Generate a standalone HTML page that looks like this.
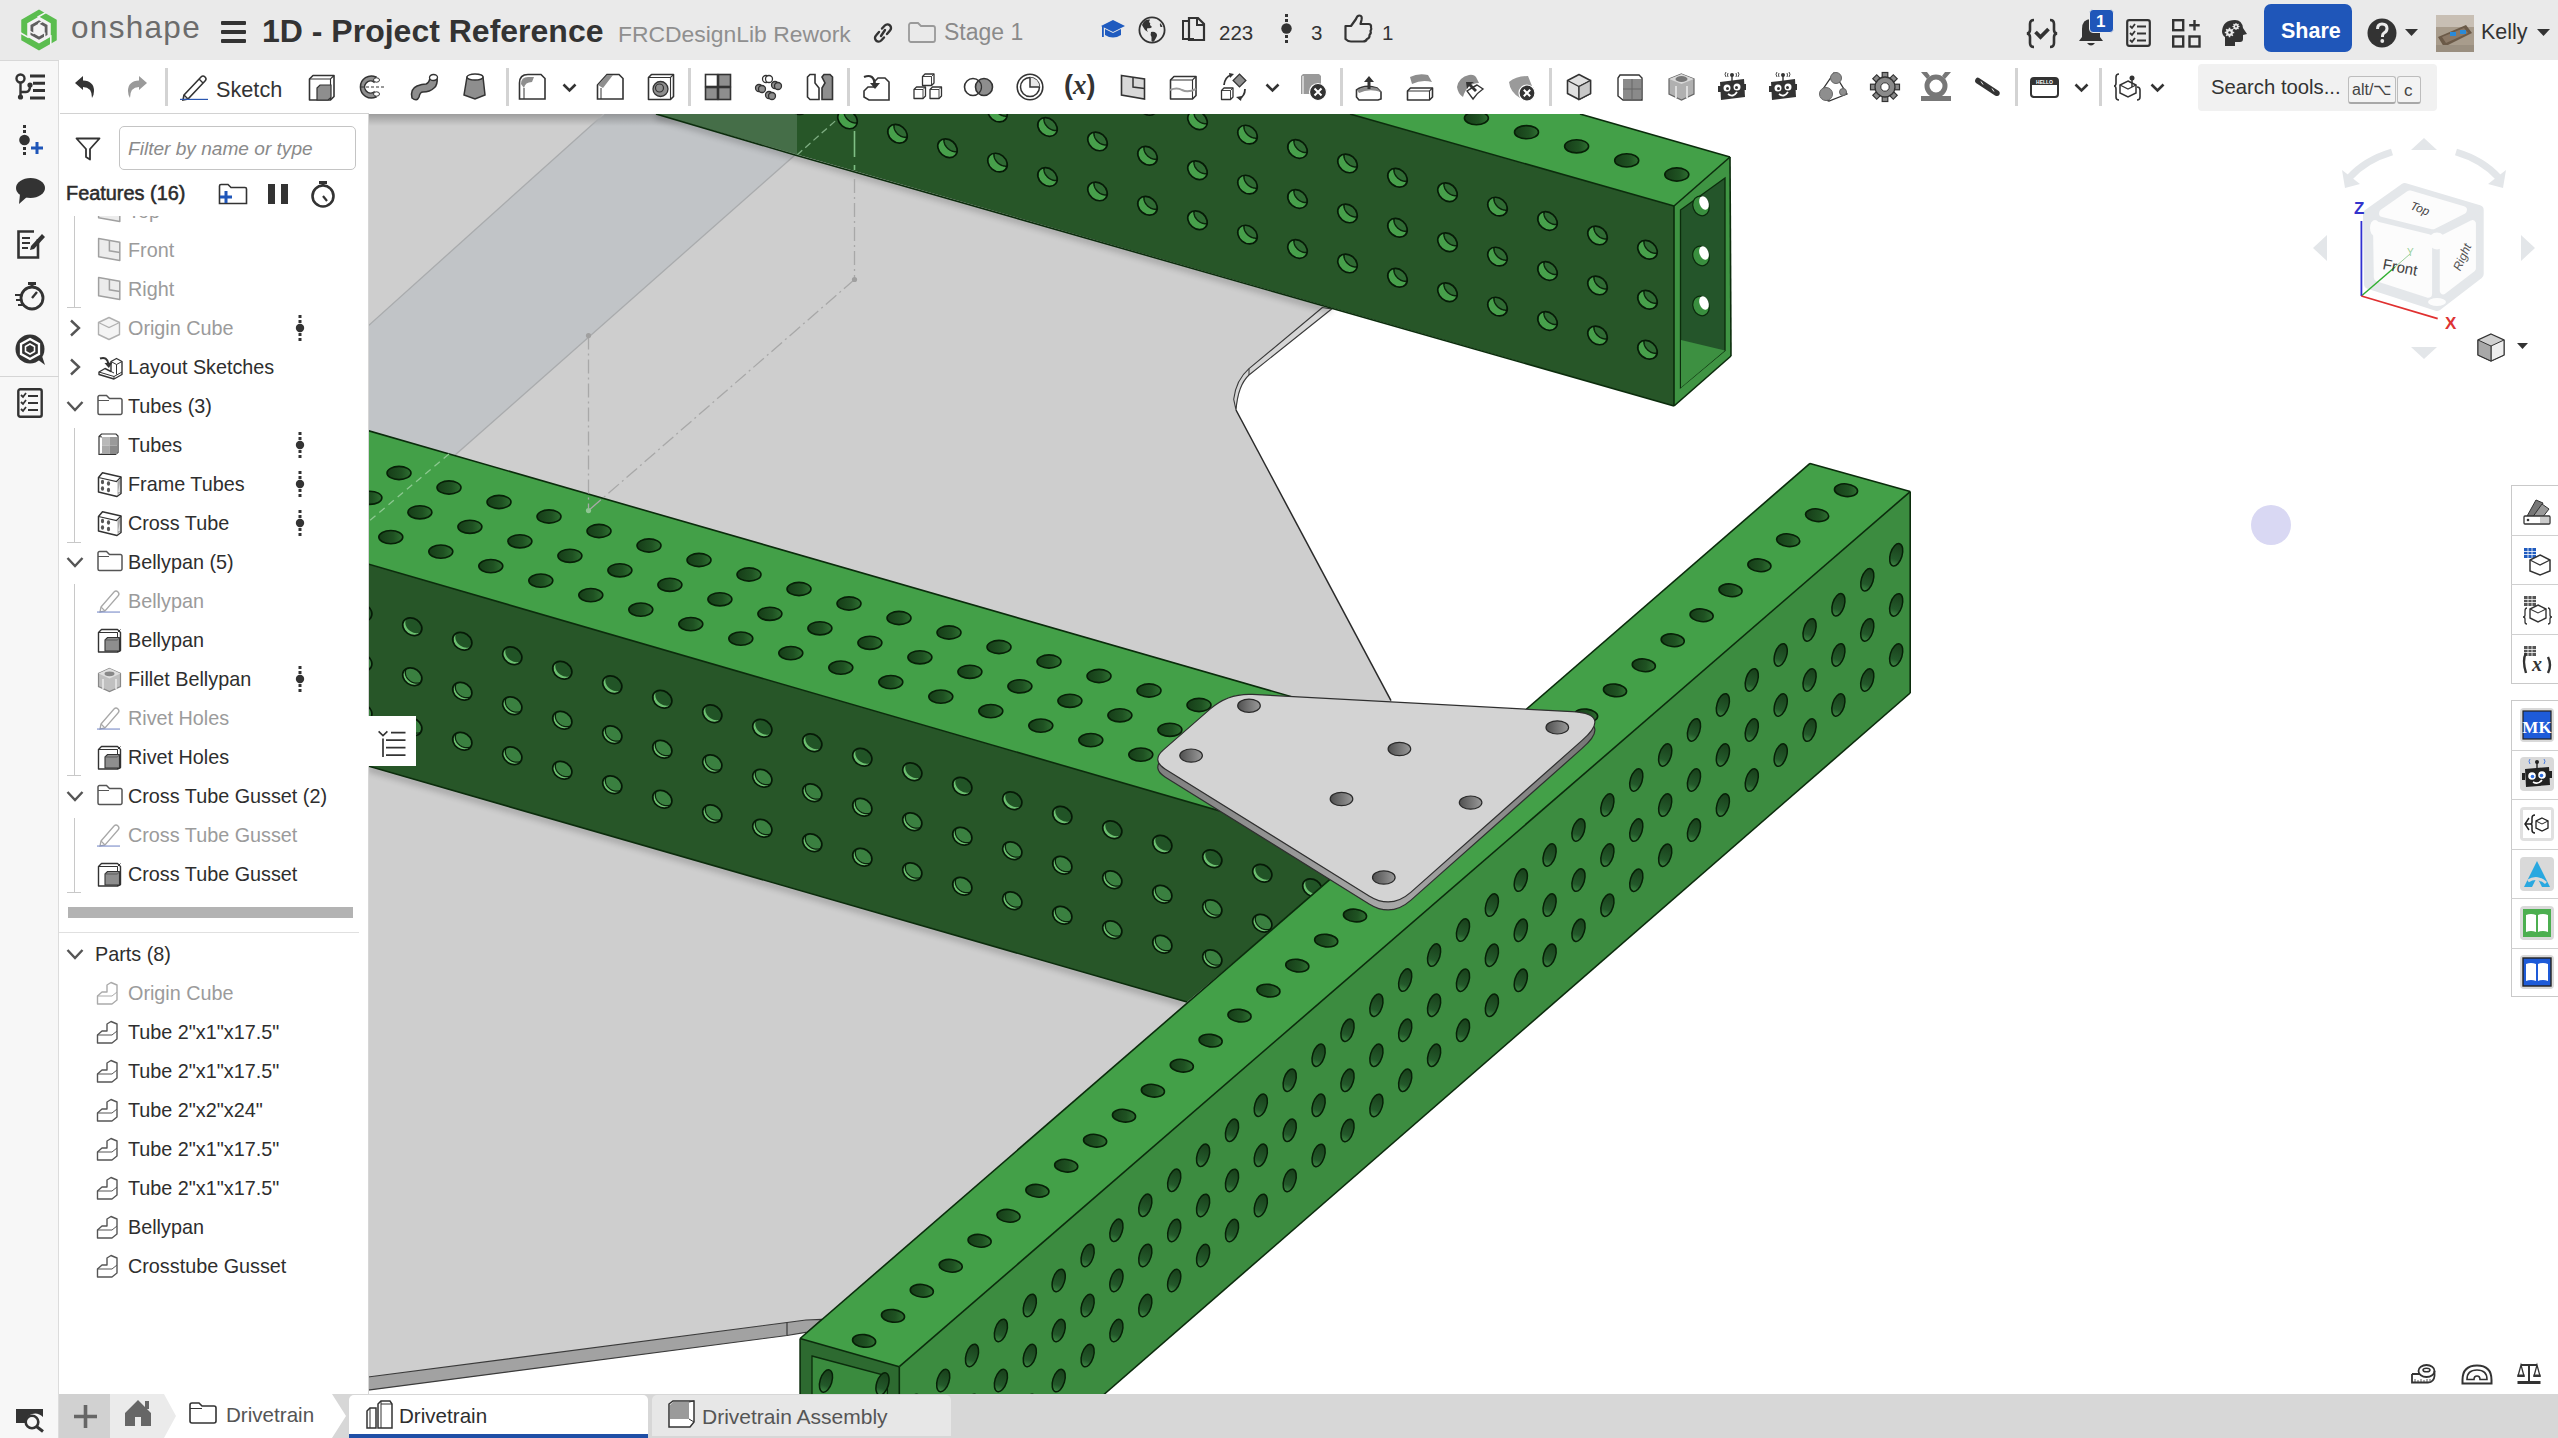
<!DOCTYPE html>
<html><head><meta charset="utf-8"><style>
*{box-sizing:border-box}
html,body{margin:0;padding:0;width:2558px;height:1438px;overflow:hidden;background:#fff;font-family:"Liberation Sans",sans-serif;color:#333}
.a{position:absolute}
.t{position:absolute;white-space:nowrap;line-height:1}
svg{overflow:visible}
</style></head>
<body>
<svg class="a" style="left:0;top:0" width="2558" height="1438" viewBox="0 0 2558 1438"><defs>
<clipPath id="cVP"><rect x="368" y="114" width="2190" height="1281"/></clipPath>
<clipPath id="cBTtop"><polygon points="1350.0,114.0 1580.0,114.0 1730.0,157.0 1674.0,206.0"/></clipPath>
<clipPath id="cBTside"><polygon points="656.0,114.0 1350.0,114.0 1674.0,206.0 1674.0,406.0"/></clipPath>
<clipPath id="cLTtop"><polygon points="368.0,430.6 1480.0,751.0 1363.0,852.5 368.0,564.0"/></clipPath>
<clipPath id="cLTside"><polygon points="368.0,564.0 1363.0,852.5 1187.0,1002.0 368.0,766.0"/></clipPath>
<clipPath id="cRTtop"><polygon points="800.1,1338.5 1810.0,463.4 1910.2,491.6 899.3,1366.7"/></clipPath>
<clipPath id="cRTside"><polygon points="899.3,1366.7 1910.2,491.6 1910.2,693.0 1103.3,1395.0 899.3,1395.0"/></clipPath>
<linearGradient id="gTop" x1="0" y1="0" x2="1" y2="0"><stop offset="0" stop-color="#163d18"/><stop offset="0.6" stop-color="#1f5222"/><stop offset="1" stop-color="#2f7032"/></linearGradient>
<linearGradient id="gSide" x1="0" y1="0" x2="0" y2="1"><stop offset="0" stop-color="#183f1a"/><stop offset="0.7" stop-color="#23592a"/><stop offset="1" stop-color="#3f8a45"/></linearGradient>
<linearGradient id="gGus" x1="0" y1="0" x2="1" y2="0"><stop offset="0" stop-color="#505050"/><stop offset="1" stop-color="#9a9a9a"/></linearGradient>
<linearGradient id="gStrip" x1="0" y1="0" x2="0" y2="1"><stop offset="0" stop-color="#6d6d6d"/><stop offset="1" stop-color="#a8a8a8"/></linearGradient>
<filter id="fBlur" x="-5%" y="-50%" width="110%" height="200%"><feGaussianBlur stdDeviation="3"/></filter>
<linearGradient id="gShadow" x1="0" y1="0" x2="0" y2="1"><stop offset="0" stop-color="#000" stop-opacity="0.10"/><stop offset="1" stop-color="#000" stop-opacity="0"/></linearGradient>
</defs><defs><g id="hSL"><ellipse rx="10.2" ry="8.2" transform="rotate(35)" fill="#6cc070"/><path d="M-5.72,-8.08 L-5.31,-8.26 L-4.88,-8.43 L-4.45,-8.56 L-4.00,-8.68 L-3.53,-8.77 L-3.06,-8.84 L-2.58,-8.89 L-2.10,-8.91 L-1.60,-8.90 L-1.11,-8.87 L-0.61,-8.82 L-0.10,-8.74 L0.40,-8.64 L0.90,-8.52 L1.40,-8.37 L1.89,-8.20 L2.38,-8.00 L2.86,-7.79 L3.34,-7.55 L3.80,-7.29 L4.26,-7.01 L4.70,-6.72 L5.13,-6.40 L5.55,-6.07 L5.95,-5.72 L6.34,-5.35 L6.71,-4.97 L7.06,-4.58 L7.39,-4.17 L7.70,-3.76 L7.98,-3.33 L8.25,-2.89 L8.50,-2.45 L8.72,-2.00 L8.91,-1.54 L9.09,-1.08 L9.23,-0.61 L9.36,-0.15 L9.45,0.32 L9.52,0.78 L9.57,1.25 L9.59,1.71 L9.58,2.16 L9.55,2.61 L9.49,3.05 L9.40,3.49 L9.29,3.91 L9.15,4.33 L8.99,4.73 L8.80,5.12 L8.59,5.49 L8.32,5.68 L7.91,5.86 L7.48,6.03 L7.05,6.16 L6.60,6.28 L6.13,6.37 L5.66,6.44 L5.18,6.49 L4.70,6.51 L4.20,6.50 L3.71,6.47 L3.21,6.42 L2.70,6.34 L2.20,6.24 L1.70,6.12 L1.20,5.97 L0.71,5.80 L0.22,5.60 L-0.26,5.39 L-0.74,5.15 L-1.20,4.89 L-1.66,4.61 L-2.10,4.32 L-2.53,4.00 L-2.95,3.67 L-3.35,3.32 L-3.74,2.95 L-4.11,2.57 L-4.46,2.18 L-4.79,1.77 L-5.10,1.36 L-5.38,0.93 L-5.65,0.49 L-5.90,0.05 L-6.12,-0.40 L-6.31,-0.86 L-6.49,-1.32 L-6.63,-1.79 L-6.76,-2.25 L-6.85,-2.72 L-6.92,-3.18 L-6.97,-3.65 L-6.99,-4.11 L-6.98,-4.56 L-6.95,-5.01 L-6.89,-5.45 L-6.80,-5.89 L-6.69,-6.31 L-6.55,-6.73 L-6.39,-7.13 L-6.20,-7.52 L-5.99,-7.89Z" fill="#215426"/><ellipse rx="10.2" ry="8.2" transform="rotate(35)" fill="none" stroke="#061a07" stroke-width="1.7"/></g><g id="hSL2"><ellipse rx="10.2" ry="8.2" transform="rotate(35)" fill="#6cc070"/><path d="M-5.72,-8.08 L-5.31,-8.26 L-4.88,-8.43 L-4.45,-8.56 L-4.00,-8.68 L-3.53,-8.77 L-3.06,-8.84 L-2.58,-8.89 L-2.10,-8.91 L-1.60,-8.90 L-1.11,-8.87 L-0.61,-8.82 L-0.10,-8.74 L0.40,-8.64 L0.90,-8.52 L1.40,-8.37 L1.89,-8.20 L2.38,-8.00 L2.86,-7.79 L3.34,-7.55 L3.80,-7.29 L4.26,-7.01 L4.70,-6.72 L5.13,-6.40 L5.55,-6.07 L5.95,-5.72 L6.34,-5.35 L6.71,-4.97 L7.06,-4.58 L7.39,-4.17 L7.70,-3.76 L7.98,-3.33 L8.25,-2.89 L8.50,-2.45 L8.72,-2.00 L8.91,-1.54 L9.09,-1.08 L9.23,-0.61 L9.36,-0.15 L9.45,0.32 L9.52,0.78 L9.57,1.25 L9.59,1.71 L9.58,2.16 L9.55,2.61 L9.49,3.05 L9.40,3.49 L9.29,3.91 L9.15,4.33 L8.99,4.73 L8.80,5.12 L8.59,5.49 L8.32,5.68 L7.91,5.86 L7.48,6.03 L7.05,6.16 L6.60,6.28 L6.13,6.37 L5.66,6.44 L5.18,6.49 L4.70,6.51 L4.20,6.50 L3.71,6.47 L3.21,6.42 L2.70,6.34 L2.20,6.24 L1.70,6.12 L1.20,5.97 L0.71,5.80 L0.22,5.60 L-0.26,5.39 L-0.74,5.15 L-1.20,4.89 L-1.66,4.61 L-2.10,4.32 L-2.53,4.00 L-2.95,3.67 L-3.35,3.32 L-3.74,2.95 L-4.11,2.57 L-4.46,2.18 L-4.79,1.77 L-5.10,1.36 L-5.38,0.93 L-5.65,0.49 L-5.90,0.05 L-6.12,-0.40 L-6.31,-0.86 L-6.49,-1.32 L-6.63,-1.79 L-6.76,-2.25 L-6.85,-2.72 L-6.92,-3.18 L-6.97,-3.65 L-6.99,-4.11 L-6.98,-4.56 L-6.95,-5.01 L-6.89,-5.45 L-6.80,-5.89 L-6.69,-6.31 L-6.55,-6.73 L-6.39,-7.13 L-6.20,-7.52 L-5.99,-7.89Z" fill="#3a8040"/><path d="M8.32,5.68 L7.91,5.86 L7.48,6.03 L7.05,6.16 L6.60,6.28 L6.13,6.37 L5.66,6.44 L5.18,6.49 L4.70,6.51 L4.20,6.50 L3.71,6.47 L3.21,6.42 L2.70,6.34 L2.20,6.24 L1.70,6.12 L1.20,5.97 L0.71,5.80 L0.22,5.60 L-0.26,5.39 L-0.74,5.15 L-1.20,4.89 L-1.66,4.61 L-2.10,4.32 L-2.53,4.00 L-2.95,3.67 L-3.35,3.32 L-3.74,2.95 L-4.11,2.57 L-4.46,2.18 L-4.79,1.77 L-5.10,1.36 L-5.38,0.93 L-5.65,0.49 L-5.90,0.05 L-6.12,-0.40 L-6.31,-0.86 L-6.49,-1.32 L-6.63,-1.79 L-6.76,-2.25 L-6.85,-2.72 L-6.92,-3.18 L-6.97,-3.65 L-6.99,-4.11 L-6.98,-4.56 L-6.95,-5.01 L-6.89,-5.45 L-6.80,-5.89 L-6.69,-6.31 L-6.55,-6.73 L-6.39,-7.13 L-6.20,-7.52 L-5.99,-7.89" fill="none" stroke="#0a230b" stroke-width="1.3"/><ellipse rx="10.2" ry="8.2" transform="rotate(35)" fill="none" stroke="#061a07" stroke-width="1.7"/></g><g id="hSD"><ellipse rx="10.6" ry="8.4" transform="rotate(40)" fill="#47a04b"/><path d="M-3.40,-9.29 L-2.91,-9.34 L-2.42,-9.37 L-1.92,-9.37 L-1.42,-9.34 L-0.91,-9.29 L-0.40,-9.21 L0.11,-9.11 L0.62,-8.98 L1.12,-8.83 L1.63,-8.65 L2.13,-8.45 L2.63,-8.23 L3.11,-7.98 L3.59,-7.71 L4.06,-7.42 L4.52,-7.11 L4.97,-6.78 L5.40,-6.43 L5.82,-6.07 L6.22,-5.69 L6.60,-5.29 L6.97,-4.88 L7.32,-4.45 L7.64,-4.01 L7.95,-3.57 L8.24,-3.11 L8.50,-2.64 L8.74,-2.17 L8.95,-1.69 L9.14,-1.20 L9.31,-0.71 L9.45,-0.22 L9.56,0.27 L9.65,0.76 L9.71,1.25 L9.74,1.73 L9.75,2.21 L9.73,2.68 L9.69,3.15 L9.60,3.49 L9.11,3.54 L8.62,3.57 L8.12,3.57 L7.62,3.54 L7.11,3.49 L6.60,3.41 L6.09,3.31 L5.58,3.18 L5.08,3.03 L4.57,2.85 L4.07,2.65 L3.57,2.43 L3.09,2.18 L2.61,1.91 L2.14,1.62 L1.68,1.31 L1.23,0.98 L0.80,0.63 L0.38,0.27 L-0.02,-0.11 L-0.40,-0.51 L-0.77,-0.92 L-1.12,-1.35 L-1.44,-1.79 L-1.75,-2.23 L-2.04,-2.69 L-2.30,-3.16 L-2.54,-3.63 L-2.75,-4.11 L-2.94,-4.60 L-3.11,-5.09 L-3.25,-5.58 L-3.36,-6.07 L-3.45,-6.56 L-3.51,-7.05 L-3.54,-7.53 L-3.55,-8.01 L-3.53,-8.48 L-3.49,-8.95Z" fill="#2f6a33"/><path d="M9.60,3.49 L9.11,3.54 L8.62,3.57 L8.12,3.57 L7.62,3.54 L7.11,3.49 L6.60,3.41 L6.09,3.31 L5.58,3.18 L5.08,3.03 L4.57,2.85 L4.07,2.65 L3.57,2.43 L3.09,2.18 L2.61,1.91 L2.14,1.62 L1.68,1.31 L1.23,0.98 L0.80,0.63 L0.38,0.27 L-0.02,-0.11 L-0.40,-0.51 L-0.77,-0.92 L-1.12,-1.35 L-1.44,-1.79 L-1.75,-2.23 L-2.04,-2.69 L-2.30,-3.16 L-2.54,-3.63 L-2.75,-4.11 L-2.94,-4.60 L-3.11,-5.09 L-3.25,-5.58 L-3.36,-6.07 L-3.45,-6.56 L-3.51,-7.05 L-3.54,-7.53 L-3.55,-8.01 L-3.53,-8.48 L-3.49,-8.95" fill="none" stroke="#0a230b" stroke-width="1.5"/><ellipse rx="10.6" ry="8.4" transform="rotate(40)" fill="none" stroke="#061a07" stroke-width="1.7"/></g><g id="hT"><ellipse rx="12" ry="6.6" fill="url(#gTop)" stroke="#072007" stroke-width="1.6"/></g><g id="hTR"><ellipse rx="11.6" ry="6.3" transform="rotate(6)" fill="url(#gTop)" stroke="#072007" stroke-width="1.6"/></g><g id="hSR"><ellipse rx="5.9" ry="11.6" transform="rotate(17)" fill="url(#gSide)" stroke="#072007" stroke-width="1.5"/></g><g id="hG"><ellipse rx="11.3" ry="6.6" fill="url(#gGus)" stroke="#2a2a2a" stroke-width="1.2"/></g></defs><g clip-path="url(#cVP)"><polygon points="368.0,114.0 656.0,114.0 1331.6,309.0 1249.0,375.0 1240.0,388.0 1236.0,410.0 1391.0,700.7 1480.0,870.0 900.0,1370.0 822.0,1319.3 806.0,1320.0 787.0,1322.5 368.0,1377.0" fill="#cecece" stroke="none" stroke-width="0" /><polygon points="368.0,1377.0 787.0,1322.5 806.0,1320.0 822.0,1319.3 807.2,1332.2 787.0,1335.5 368.0,1390.2" fill="#a2a2a2" stroke="#3a3a3a" stroke-width="1.2" stroke-linejoin="round"/><line x1="787.0" y1="1322.5" x2="787.0" y2="1335.5" stroke="#3a3a3a" stroke-width="1.2" /><polygon points="604.0,114.0 656.0,114.0 795.0,155.0 454.0,456.0 368.0,430.6 368.0,326.0" fill="#c1c4c7" stroke="none" stroke-width="0" /><linearGradient id="gTopSh" x1="0" y1="0" x2="0" y2="1"><stop offset="0" stop-color="#000" stop-opacity="0.24"/><stop offset="1" stop-color="#000" stop-opacity="0"/></linearGradient><polygon points="368,114 656,114 697,126 368,126" fill="url(#gTopSh)"/><line x1="604.0" y1="114.0" x2="368.0" y2="326.0" stroke="#a9abad" stroke-width="1.3" /><line x1="795.0" y1="155.0" x2="454.0" y2="456.0" stroke="#a9abad" stroke-width="1.3" /><path d="M1322.4,307.5 L1249,368.7 Q1236,380 1233.7,399.3 L1236,410 Q1238,385 1249,375 L1331.6,309 Z" fill="#d6d6d6" stroke="#3a3a3a" stroke-width="1.1"/><line x1="1249.0" y1="368.7" x2="1249.0" y2="375.0" stroke="#3a3a3a" stroke-width="1" /><line x1="1236.0" y1="410.0" x2="1391.0" y2="700.7" stroke="#2a2a2a" stroke-width="1.5" /><g filter="url(#fBlur)" opacity="0.22"><line x1="656.0" y1="116.0" x2="1331.0" y2="310.0" stroke="#000" stroke-width="6" /><line x1="368.0" y1="768.0" x2="1187.0" y2="1004.0" stroke="#000" stroke-width="6" /></g><polygon points="656.0,114.0 1350.0,114.0 1674.0,206.0 1674.0,406.0" fill="#275628" stroke="none" stroke-width="0" /><polygon points="1350.0,114.0 1580.0,114.0 1730.0,157.0 1674.0,206.0" fill="#43a048" stroke="none" stroke-width="0" /><polygon points="1674.0,206.0 1730.0,157.0 1731.0,356.0 1674.0,406.0" fill="#3f9443" stroke="none" stroke-width="0" /><polygon points="1680.5,210.0 1725.0,178.0 1725.0,350.5 1680.5,387.5" fill="#24552a" stroke="#0b2c0c" stroke-width="1.3" /><polygon points="1681.0,340.0 1725.0,350.5 1681.0,387.5" fill="#3d9041" stroke="none" stroke-width="0" /><ellipse cx="1701" cy="206" rx="8" ry="10" transform="rotate(-20 1701 206)" fill="#3a8f3f" stroke="#0b2a0c" stroke-width="1.2"/><ellipse cx="1704" cy="203" rx="4.5" ry="7" transform="rotate(-20 1704 203)" fill="#fff"/><ellipse cx="1701" cy="256" rx="8" ry="10" transform="rotate(-20 1701 256)" fill="#3a8f3f" stroke="#0b2a0c" stroke-width="1.2"/><ellipse cx="1704" cy="253" rx="4.5" ry="7" transform="rotate(-20 1704 253)" fill="#fff"/><ellipse cx="1701" cy="306" rx="8" ry="10" transform="rotate(-20 1701 306)" fill="#3a8f3f" stroke="#0b2a0c" stroke-width="1.2"/><ellipse cx="1704" cy="303" rx="4.5" ry="7" transform="rotate(-20 1704 303)" fill="#fff"/><g clip-path="url(#cBTtop)"><use href="#hT" x="1476.4" y="118.1"/><use href="#hT" x="1526.5" y="132.2"/><use href="#hT" x="1576.6" y="146.3"/><use href="#hT" x="1626.7" y="160.4"/><use href="#hT" x="1676.8" y="174.5"/><use href="#hT" x="1726.9" y="188.6"/></g><g clip-path="url(#cBTside)"><use href="#hSD" x="797.5" y="105.0"/><use href="#hSD" x="847.5" y="119.4"/><use href="#hSD" x="897.5" y="133.8"/><use href="#hSD" x="947.5" y="148.2"/><use href="#hSD" x="997.5" y="112.6"/><use href="#hSD" x="997.5" y="162.6"/><use href="#hSD" x="1047.5" y="127.0"/><use href="#hSD" x="1047.5" y="177.0"/><use href="#hSD" x="1097.5" y="141.4"/><use href="#hSD" x="1097.5" y="191.4"/><use href="#hSD" x="1147.5" y="105.8"/><use href="#hSD" x="1147.5" y="155.8"/><use href="#hSD" x="1147.5" y="205.8"/><use href="#hSD" x="1197.5" y="120.2"/><use href="#hSD" x="1197.5" y="170.2"/><use href="#hSD" x="1197.5" y="220.2"/><use href="#hSD" x="1247.5" y="134.6"/><use href="#hSD" x="1247.5" y="184.6"/><use href="#hSD" x="1247.5" y="234.6"/><use href="#hSD" x="1297.5" y="149.0"/><use href="#hSD" x="1297.5" y="199.0"/><use href="#hSD" x="1297.5" y="249.0"/><use href="#hSD" x="1347.5" y="163.4"/><use href="#hSD" x="1347.5" y="213.4"/><use href="#hSD" x="1347.5" y="263.4"/><use href="#hSD" x="1397.5" y="177.8"/><use href="#hSD" x="1397.5" y="227.8"/><use href="#hSD" x="1397.5" y="277.8"/><use href="#hSD" x="1447.5" y="192.2"/><use href="#hSD" x="1447.5" y="242.2"/><use href="#hSD" x="1447.5" y="292.2"/><use href="#hSD" x="1497.5" y="206.6"/><use href="#hSD" x="1497.5" y="256.6"/><use href="#hSD" x="1497.5" y="306.6"/><use href="#hSD" x="1547.5" y="221.0"/><use href="#hSD" x="1547.5" y="271.0"/><use href="#hSD" x="1547.5" y="321.0"/><use href="#hSD" x="1597.5" y="235.4"/><use href="#hSD" x="1597.5" y="285.4"/><use href="#hSD" x="1597.5" y="335.4"/><use href="#hSD" x="1647.5" y="249.8"/><use href="#hSD" x="1647.5" y="299.8"/><use href="#hSD" x="1647.5" y="349.8"/></g><polygon points="656,114 797,114 797,155.6" fill="#6a8c6f" fill-opacity="0.45"/><line x1="797.0" y1="155.0" x2="835.7" y2="120.6" stroke="#7fae83" stroke-width="1.3" stroke-dasharray="7 4"/><line x1="656.0" y1="114.0" x2="795.0" y2="155.0" stroke="#0b2c0c" stroke-width="1.6" /><line x1="795.0" y1="155.0" x2="1674.0" y2="406.0" stroke="#0b2c0c" stroke-width="1.6" /><line x1="1350.0" y1="114.0" x2="1674.0" y2="206.0" stroke="#0b2c0c" stroke-width="1.6" /><line x1="1580.0" y1="114.0" x2="1730.0" y2="157.0" stroke="#0b2c0c" stroke-width="1.6" /><line x1="1674.0" y1="206.0" x2="1674.0" y2="406.0" stroke="#0b2c0c" stroke-width="1.6" /><line x1="1730.0" y1="157.0" x2="1731.0" y2="356.0" stroke="#0b2c0c" stroke-width="1.6" /><line x1="1731.0" y1="356.0" x2="1674.0" y2="406.0" stroke="#0b2c0c" stroke-width="1.6" /><line x1="1674.0" y1="206.0" x2="1730.0" y2="157.0" stroke="#0b2c0c" stroke-width="1.6" /><polygon points="368.0,564.0 1363.0,852.5 1187.0,1002.0 368.0,766.0" fill="#275628" stroke="none" stroke-width="0" /><polygon points="368.0,430.6 1480.0,751.0 1363.0,852.5 368.0,564.0" fill="#43a048" stroke="none" stroke-width="0" /><g clip-path="url(#cLTtop)"><use href="#hT" x="299.0" y="444.0"/><use href="#hT" x="319.9" y="483.3"/><use href="#hT" x="340.8" y="522.6"/><use href="#hT" x="349.0" y="458.5"/><use href="#hT" x="369.9" y="497.8"/><use href="#hT" x="390.8" y="537.1"/><use href="#hT" x="399.0" y="473.0"/><use href="#hT" x="419.9" y="512.3"/><use href="#hT" x="440.8" y="551.6"/><use href="#hT" x="449.0" y="487.5"/><use href="#hT" x="469.9" y="526.8"/><use href="#hT" x="490.8" y="566.1"/><use href="#hT" x="499.0" y="502.0"/><use href="#hT" x="519.9" y="541.3"/><use href="#hT" x="540.8" y="580.6"/><use href="#hT" x="549.0" y="516.5"/><use href="#hT" x="569.9" y="555.8"/><use href="#hT" x="590.8" y="595.1"/><use href="#hT" x="599.0" y="531.0"/><use href="#hT" x="619.9" y="570.3"/><use href="#hT" x="640.8" y="609.6"/><use href="#hT" x="649.0" y="545.5"/><use href="#hT" x="669.9" y="584.8"/><use href="#hT" x="690.8" y="624.1"/><use href="#hT" x="699.0" y="560.0"/><use href="#hT" x="719.9" y="599.3"/><use href="#hT" x="740.8" y="638.6"/><use href="#hT" x="749.0" y="574.5"/><use href="#hT" x="769.9" y="613.8"/><use href="#hT" x="790.8" y="653.1"/><use href="#hT" x="799.0" y="589.0"/><use href="#hT" x="819.9" y="628.3"/><use href="#hT" x="840.8" y="667.6"/><use href="#hT" x="849.0" y="603.5"/><use href="#hT" x="869.9" y="642.8"/><use href="#hT" x="890.8" y="682.1"/><use href="#hT" x="899.0" y="618.0"/><use href="#hT" x="919.9" y="657.3"/><use href="#hT" x="940.8" y="696.6"/><use href="#hT" x="949.0" y="632.5"/><use href="#hT" x="969.9" y="671.8"/><use href="#hT" x="990.8" y="711.1"/><use href="#hT" x="999.0" y="647.0"/><use href="#hT" x="1019.9" y="686.3"/><use href="#hT" x="1040.8" y="725.6"/><use href="#hT" x="1049.0" y="661.5"/><use href="#hT" x="1069.9" y="700.8"/><use href="#hT" x="1090.8" y="740.1"/><use href="#hT" x="1099.0" y="676.0"/><use href="#hT" x="1119.9" y="715.3"/><use href="#hT" x="1140.8" y="754.6"/><use href="#hT" x="1149.0" y="690.5"/><use href="#hT" x="1169.9" y="729.8"/><use href="#hT" x="1190.8" y="769.1"/><use href="#hT" x="1199.0" y="705.0"/><use href="#hT" x="1219.9" y="744.3"/><use href="#hT" x="1240.8" y="783.6"/><use href="#hT" x="1249.0" y="719.5"/><use href="#hT" x="1269.9" y="758.8"/><use href="#hT" x="1290.8" y="798.1"/><use href="#hT" x="1299.0" y="734.0"/><use href="#hT" x="1319.9" y="773.3"/><use href="#hT" x="1340.8" y="812.6"/><use href="#hT" x="1349.0" y="748.5"/><use href="#hT" x="1369.9" y="787.8"/><use href="#hT" x="1390.8" y="827.1"/><use href="#hT" x="1399.0" y="763.0"/><use href="#hT" x="1419.9" y="802.3"/><use href="#hT" x="1440.8" y="841.6"/><use href="#hT" x="1449.0" y="777.5"/><use href="#hT" x="1469.9" y="816.8"/><use href="#hT" x="1490.8" y="856.1"/><use href="#hT" x="1499.0" y="792.0"/><use href="#hT" x="1519.9" y="831.3"/><use href="#hT" x="1540.8" y="870.6"/><use href="#hT" x="1549.0" y="806.5"/><use href="#hT" x="1569.9" y="845.8"/><use href="#hT" x="1590.8" y="885.1"/></g><g clip-path="url(#cLTside)"><use href="#hSL" x="362.3" y="612.2"/><use href="#hSL2" x="362.3" y="662.2"/><use href="#hSL2" x="362.3" y="712.2"/><use href="#hSL" x="412.3" y="626.7"/><use href="#hSL2" x="412.3" y="676.7"/><use href="#hSL2" x="412.3" y="726.7"/><use href="#hSL" x="462.3" y="641.2"/><use href="#hSL2" x="462.3" y="691.2"/><use href="#hSL2" x="462.3" y="741.2"/><use href="#hSL" x="512.3" y="655.7"/><use href="#hSL2" x="512.3" y="705.7"/><use href="#hSL2" x="512.3" y="755.7"/><use href="#hSL" x="562.3" y="670.2"/><use href="#hSL2" x="562.3" y="720.2"/><use href="#hSL2" x="562.3" y="770.2"/><use href="#hSL" x="612.3" y="684.7"/><use href="#hSL2" x="612.3" y="734.7"/><use href="#hSL2" x="612.3" y="784.7"/><use href="#hSL" x="662.3" y="699.2"/><use href="#hSL2" x="662.3" y="749.2"/><use href="#hSL2" x="662.3" y="799.2"/><use href="#hSL" x="712.3" y="713.7"/><use href="#hSL2" x="712.3" y="763.7"/><use href="#hSL2" x="712.3" y="813.7"/><use href="#hSL" x="762.3" y="728.2"/><use href="#hSL2" x="762.3" y="778.2"/><use href="#hSL2" x="762.3" y="828.2"/><use href="#hSL" x="812.3" y="742.7"/><use href="#hSL2" x="812.3" y="792.7"/><use href="#hSL2" x="812.3" y="842.7"/><use href="#hSL" x="862.3" y="757.2"/><use href="#hSL2" x="862.3" y="807.2"/><use href="#hSL2" x="862.3" y="857.2"/><use href="#hSL" x="912.3" y="771.7"/><use href="#hSL2" x="912.3" y="821.7"/><use href="#hSL2" x="912.3" y="871.7"/><use href="#hSL" x="962.3" y="786.2"/><use href="#hSL2" x="962.3" y="836.2"/><use href="#hSL2" x="962.3" y="886.2"/><use href="#hSL" x="1012.3" y="800.7"/><use href="#hSL2" x="1012.3" y="850.7"/><use href="#hSL2" x="1012.3" y="900.7"/><use href="#hSL" x="1062.3" y="815.2"/><use href="#hSL2" x="1062.3" y="865.2"/><use href="#hSL2" x="1062.3" y="915.2"/><use href="#hSL" x="1112.3" y="829.7"/><use href="#hSL2" x="1112.3" y="879.7"/><use href="#hSL2" x="1112.3" y="929.7"/><use href="#hSL" x="1162.3" y="844.2"/><use href="#hSL2" x="1162.3" y="894.2"/><use href="#hSL2" x="1162.3" y="944.2"/><use href="#hSL" x="1212.3" y="858.7"/><use href="#hSL2" x="1212.3" y="908.7"/><use href="#hSL2" x="1212.3" y="958.7"/><use href="#hSL" x="1262.3" y="873.2"/><use href="#hSL2" x="1262.3" y="923.2"/><use href="#hSL2" x="1262.3" y="973.2"/><use href="#hSL" x="1312.3" y="887.7"/><use href="#hSL2" x="1312.3" y="937.7"/><use href="#hSL2" x="1312.3" y="987.7"/><use href="#hSL" x="1362.3" y="902.2"/><use href="#hSL2" x="1362.3" y="952.2"/><use href="#hSL2" x="1362.3" y="1002.2"/></g><line x1="368.0" y1="430.6" x2="1480.0" y2="751.0" stroke="#0b2c0c" stroke-width="1.6" /><line x1="368.0" y1="564.0" x2="1363.0" y2="852.5" stroke="#0b2c0c" stroke-width="1.6" /><line x1="368.0" y1="766.0" x2="1187.0" y2="1002.0" stroke="#0b2c0c" stroke-width="1.6" /><line x1="449.0" y1="454.0" x2="368.0" y2="522.0" stroke="#8cc890" stroke-width="1.3" stroke-dasharray="7 5"/><polygon points="899.3,1366.7 1910.2,491.6 1910.2,693.0 1103.3,1395.0 899.3,1395.0" fill="#3c8c40" stroke="none" stroke-width="0" /><polygon points="800.1,1338.5 1810.0,463.4 1910.2,491.6 899.3,1366.7" fill="#43a048" stroke="none" stroke-width="0" /><polygon points="800.1,1338.5 899.3,1366.7 899.3,1395.0 800.1,1395.0" fill="#2d6a30" stroke="none" stroke-width="0" /><polygon points="812.0,1356.0 887.4,1376.0 887.4,1395.0 812.0,1395.0" fill="#3a8b3e" stroke="#0b2c0c" stroke-width="1.3" /><use href="#hSR" x="826.0" y="1381.0"/><use href="#hSR" x="882.5" y="1384.0"/><g clip-path="url(#cRTtop)"><use href="#hTR" x="1846.0" y="490.2"/><use href="#hTR" x="1817.1" y="515.2"/><use href="#hTR" x="1788.2" y="540.2"/><use href="#hTR" x="1759.4" y="565.3"/><use href="#hTR" x="1730.5" y="590.3"/><use href="#hTR" x="1701.6" y="615.3"/><use href="#hTR" x="1672.7" y="640.3"/><use href="#hTR" x="1643.8" y="665.3"/><use href="#hTR" x="1615.0" y="690.4"/><use href="#hTR" x="1586.1" y="715.4"/><use href="#hTR" x="1557.2" y="740.4"/><use href="#hTR" x="1528.3" y="765.4"/><use href="#hTR" x="1499.4" y="790.4"/><use href="#hTR" x="1470.6" y="815.5"/><use href="#hTR" x="1441.7" y="840.5"/><use href="#hTR" x="1412.8" y="865.5"/><use href="#hTR" x="1383.9" y="890.5"/><use href="#hTR" x="1355.0" y="915.5"/><use href="#hTR" x="1326.2" y="940.6"/><use href="#hTR" x="1297.3" y="965.6"/><use href="#hTR" x="1268.4" y="990.6"/><use href="#hTR" x="1239.5" y="1015.6"/><use href="#hTR" x="1210.6" y="1040.6"/><use href="#hTR" x="1181.8" y="1065.7"/><use href="#hTR" x="1152.9" y="1090.7"/><use href="#hTR" x="1124.0" y="1115.7"/><use href="#hTR" x="1095.1" y="1140.7"/><use href="#hTR" x="1066.2" y="1165.7"/><use href="#hTR" x="1037.4" y="1190.8"/><use href="#hTR" x="1008.5" y="1215.8"/><use href="#hTR" x="979.6" y="1240.8"/><use href="#hTR" x="950.7" y="1265.8"/><use href="#hTR" x="921.8" y="1290.8"/><use href="#hTR" x="893.0" y="1315.9"/><use href="#hTR" x="864.1" y="1340.9"/><use href="#hTR" x="835.2" y="1365.9"/><use href="#hTR" x="806.3" y="1390.9"/><use href="#hTR" x="777.4" y="1415.9"/><use href="#hTR" x="748.6" y="1441.0"/><use href="#hTR" x="719.7" y="1466.0"/></g><g clip-path="url(#cRTside)"><use href="#hSR" x="1896.2" y="554.8"/><use href="#hSR" x="1896.2" y="604.9"/><use href="#hSR" x="1896.2" y="655.0"/><use href="#hSR" x="1867.3" y="579.8"/><use href="#hSR" x="1867.3" y="629.9"/><use href="#hSR" x="1867.3" y="680.0"/><use href="#hSR" x="1838.4" y="604.8"/><use href="#hSR" x="1838.4" y="654.9"/><use href="#hSR" x="1838.4" y="705.0"/><use href="#hSR" x="1809.6" y="629.9"/><use href="#hSR" x="1809.6" y="680.0"/><use href="#hSR" x="1809.6" y="730.1"/><use href="#hSR" x="1780.7" y="654.9"/><use href="#hSR" x="1780.7" y="705.0"/><use href="#hSR" x="1780.7" y="755.1"/><use href="#hSR" x="1751.8" y="679.9"/><use href="#hSR" x="1751.8" y="730.0"/><use href="#hSR" x="1751.8" y="780.1"/><use href="#hSR" x="1722.9" y="704.9"/><use href="#hSR" x="1722.9" y="755.0"/><use href="#hSR" x="1722.9" y="805.1"/><use href="#hSR" x="1694.0" y="729.9"/><use href="#hSR" x="1694.0" y="780.0"/><use href="#hSR" x="1694.0" y="830.1"/><use href="#hSR" x="1665.2" y="755.0"/><use href="#hSR" x="1665.2" y="805.1"/><use href="#hSR" x="1665.2" y="855.2"/><use href="#hSR" x="1636.3" y="780.0"/><use href="#hSR" x="1636.3" y="830.1"/><use href="#hSR" x="1636.3" y="880.2"/><use href="#hSR" x="1607.4" y="805.0"/><use href="#hSR" x="1607.4" y="855.1"/><use href="#hSR" x="1607.4" y="905.2"/><use href="#hSR" x="1578.5" y="830.0"/><use href="#hSR" x="1578.5" y="880.1"/><use href="#hSR" x="1578.5" y="930.2"/><use href="#hSR" x="1549.6" y="855.0"/><use href="#hSR" x="1549.6" y="905.1"/><use href="#hSR" x="1549.6" y="955.2"/><use href="#hSR" x="1520.8" y="880.1"/><use href="#hSR" x="1520.8" y="930.2"/><use href="#hSR" x="1520.8" y="980.3"/><use href="#hSR" x="1491.9" y="905.1"/><use href="#hSR" x="1491.9" y="955.2"/><use href="#hSR" x="1491.9" y="1005.3"/><use href="#hSR" x="1463.0" y="930.1"/><use href="#hSR" x="1463.0" y="980.2"/><use href="#hSR" x="1463.0" y="1030.3"/><use href="#hSR" x="1434.1" y="955.1"/><use href="#hSR" x="1434.1" y="1005.2"/><use href="#hSR" x="1434.1" y="1055.3"/><use href="#hSR" x="1405.2" y="980.1"/><use href="#hSR" x="1405.2" y="1030.2"/><use href="#hSR" x="1405.2" y="1080.3"/><use href="#hSR" x="1376.4" y="1005.2"/><use href="#hSR" x="1376.4" y="1055.3"/><use href="#hSR" x="1376.4" y="1105.4"/><use href="#hSR" x="1347.5" y="1030.2"/><use href="#hSR" x="1347.5" y="1080.3"/><use href="#hSR" x="1347.5" y="1130.4"/><use href="#hSR" x="1318.6" y="1055.2"/><use href="#hSR" x="1318.6" y="1105.3"/><use href="#hSR" x="1318.6" y="1155.4"/><use href="#hSR" x="1289.7" y="1080.2"/><use href="#hSR" x="1289.7" y="1130.3"/><use href="#hSR" x="1289.7" y="1180.4"/><use href="#hSR" x="1260.8" y="1105.2"/><use href="#hSR" x="1260.8" y="1155.3"/><use href="#hSR" x="1260.8" y="1205.4"/><use href="#hSR" x="1232.0" y="1130.3"/><use href="#hSR" x="1232.0" y="1180.4"/><use href="#hSR" x="1232.0" y="1230.5"/><use href="#hSR" x="1203.1" y="1155.3"/><use href="#hSR" x="1203.1" y="1205.4"/><use href="#hSR" x="1203.1" y="1255.5"/><use href="#hSR" x="1174.2" y="1180.3"/><use href="#hSR" x="1174.2" y="1230.4"/><use href="#hSR" x="1174.2" y="1280.5"/><use href="#hSR" x="1145.3" y="1205.3"/><use href="#hSR" x="1145.3" y="1255.4"/><use href="#hSR" x="1145.3" y="1305.5"/><use href="#hSR" x="1116.4" y="1230.3"/><use href="#hSR" x="1116.4" y="1280.4"/><use href="#hSR" x="1116.4" y="1330.5"/><use href="#hSR" x="1087.6" y="1255.4"/><use href="#hSR" x="1087.6" y="1305.5"/><use href="#hSR" x="1087.6" y="1355.6"/><use href="#hSR" x="1058.7" y="1280.4"/><use href="#hSR" x="1058.7" y="1330.5"/><use href="#hSR" x="1058.7" y="1380.6"/><use href="#hSR" x="1029.8" y="1305.4"/><use href="#hSR" x="1029.8" y="1355.5"/><use href="#hSR" x="1029.8" y="1405.6"/><use href="#hSR" x="1000.9" y="1330.4"/><use href="#hSR" x="1000.9" y="1380.5"/><use href="#hSR" x="1000.9" y="1430.6"/><use href="#hSR" x="972.0" y="1355.4"/><use href="#hSR" x="972.0" y="1405.5"/><use href="#hSR" x="972.0" y="1455.6"/><use href="#hSR" x="943.2" y="1380.5"/><use href="#hSR" x="943.2" y="1430.6"/><use href="#hSR" x="943.2" y="1480.7"/><use href="#hSR" x="914.3" y="1405.5"/><use href="#hSR" x="914.3" y="1455.6"/><use href="#hSR" x="914.3" y="1505.7"/><use href="#hSR" x="885.4" y="1430.5"/><use href="#hSR" x="885.4" y="1480.6"/><use href="#hSR" x="885.4" y="1530.7"/><use href="#hSR" x="856.5" y="1455.5"/><use href="#hSR" x="856.5" y="1505.6"/><use href="#hSR" x="856.5" y="1555.7"/><use href="#hSR" x="827.6" y="1480.5"/><use href="#hSR" x="827.6" y="1530.6"/><use href="#hSR" x="827.6" y="1580.7"/><use href="#hSR" x="798.8" y="1505.6"/><use href="#hSR" x="798.8" y="1555.7"/><use href="#hSR" x="798.8" y="1605.8"/><use href="#hSR" x="769.9" y="1530.6"/><use href="#hSR" x="769.9" y="1580.7"/><use href="#hSR" x="769.9" y="1630.8"/></g><line x1="800.1" y1="1338.5" x2="1810.0" y2="463.4" stroke="#0b2c0c" stroke-width="1.6" /><line x1="1810.0" y1="463.4" x2="1910.2" y2="491.6" stroke="#0b2c0c" stroke-width="1.6" /><line x1="1910.2" y1="491.6" x2="899.3" y2="1366.7" stroke="#0b2c0c" stroke-width="1.6" /><line x1="800.1" y1="1338.5" x2="899.3" y2="1366.7" stroke="#0b2c0c" stroke-width="1.6" /><line x1="1910.2" y1="491.6" x2="1910.2" y2="693.0" stroke="#0b2c0c" stroke-width="1.6" /><line x1="1910.2" y1="693.0" x2="1103.3" y2="1395.0" stroke="#0b2c0c" stroke-width="1.6" /><line x1="899.3" y1="1366.7" x2="899.3" y2="1395.0" stroke="#0b2c0c" stroke-width="1.6" /><line x1="800.1" y1="1338.5" x2="800.1" y2="1395.0" stroke="#0b2c0c" stroke-width="1.6" /><path d="M1210.3,716.9 Q1228.4,701.1 1252.4,702.4 L1572.1,719.7 Q1612.0,721.9 1582.1,748.4 L1410.7,900.4 Q1391.2,917.6 1369.1,903.9 L1165.0,776.9 Q1151.4,768.4 1163.4,757.9 Z" fill="url(#gStrip)" stroke="#2f2f2f" stroke-width="1.2"/><path d="M1210.3,708.9 Q1228.4,693.1 1252.4,694.4 L1572.1,711.7 Q1612.0,713.9 1582.1,740.4 L1410.7,892.4 Q1391.2,909.6 1369.1,895.9 L1165.0,768.9 Q1151.4,760.4 1163.4,749.9 Z" fill="#d3d3d3" stroke="#2f2f2f" stroke-width="1.2"/><use href="#hG" x="1249.0" y="705.7"/><use href="#hG" x="1191.1" y="755.6"/><use href="#hG" x="1399.4" y="749.0"/><use href="#hG" x="1341.5" y="799.0"/><use href="#hG" x="1470.6" y="802.6"/><use href="#hG" x="1383.8" y="877.5"/><use href="#hG" x="1557.3" y="727.4"/><line x1="854.5" y1="131.0" x2="854.5" y2="170.0" stroke="#7fbf85" stroke-width="1.6" stroke-dasharray="26 8"/><line x1="854.5" y1="179.0" x2="854.5" y2="279.5" stroke="#a8a8a8" stroke-width="1.3" stroke-dasharray="14 4 2 4"/><line x1="854.5" y1="279.5" x2="588.5" y2="510.6" stroke="#a8a8a8" stroke-width="1.3" stroke-dasharray="14 4 2 4"/><line x1="588.5" y1="335.6" x2="588.5" y2="510.6" stroke="#a8a8a8" stroke-width="1.3" stroke-dasharray="14 4 2 4"/><circle cx="854.5" cy="279.5" r="2.6" fill="#a0a0a0"/><circle cx="588.5" cy="335.6" r="2.6" fill="#a0a0a0"/><circle cx="588.5" cy="510.6" r="2.6" fill="#8fc593"/></g><circle cx="2271" cy="525" r="20" fill="#d9d8f3"/></svg><div class="a" style="left:0px;top:0px;width:2558px;height:60px;background:#eaeaea"></div><svg class="a" style="left:16px;top:8.5px" width="46" height="44" viewBox="0 0 46 44"><polygon points="23.00,7.40 34.78,14.20 34.78,27.80 23.00,34.60 11.22,27.80 11.22,14.20" fill="#f3f3f3"/><polygon points="5.25,24.35 5.25,10.75 23.00,0.50 28.98,3.95 23.00,7.40 11.22,14.20 11.22,27.80" fill="#5bbd4f"/><polygon points="28.98,3.95 40.75,10.75 40.75,31.25 34.78,34.70 34.78,27.80 34.78,14.20 23.00,7.40" fill="#5bbd4f"/><polygon points="34.78,34.70 23.00,41.50 5.25,31.25 5.25,24.35 11.22,27.80 23.00,34.60 34.78,27.80" fill="#5bbd4f"/><line x1="21.51" y1="8.26" x2="30.47" y2="3.09" stroke="#f3f3f3" stroke-width="1.6"/><line x1="34.78" y1="26.07" x2="34.78" y2="36.43" stroke="#f3f3f3" stroke-width="1.6"/><line x1="12.72" y1="28.66" x2="3.75" y2="23.49" stroke="#f3f3f3" stroke-width="1.6"/><polygon points="14.51,22.70 14.51,16.10 23.00,11.20 25.77,12.80 23.00,14.40 17.28,17.70 17.28,24.30" fill="#5f5f5f"/><polygon points="25.77,12.80 31.49,16.10 31.49,25.90 28.72,27.50 28.72,24.30 28.72,17.70 23.00,14.40" fill="#5f5f5f"/><polygon points="28.72,27.50 23.00,30.80 14.51,25.90 14.51,22.70 17.28,24.30 23.00,27.60 28.72,24.30" fill="#5f5f5f"/><line x1="22.31" y1="14.80" x2="26.46" y2="12.40" stroke="#f3f3f3" stroke-width="1.4"/><line x1="28.72" y1="23.50" x2="28.72" y2="28.30" stroke="#f3f3f3" stroke-width="1.4"/><line x1="17.98" y1="24.70" x2="13.82" y2="22.30" stroke="#f3f3f3" stroke-width="1.4"/></svg><div class="t" style="left:71px;top:12px;font-size:31.5px;color:#6c6c6c;font-weight:normal;font-style:normal;letter-spacing:1.3px">onshape</div><div class="a" style="left:221px;top:21px;width:25px;height:4px;background:#333;border-radius:1px"></div><div class="a" style="left:221px;top:30px;width:25px;height:4px;background:#333;border-radius:1px"></div><div class="a" style="left:221px;top:39px;width:25px;height:4px;background:#333;border-radius:1px"></div><div class="t" style="left:262px;top:15px;font-size:32px;color:#333;font-weight:bold;font-style:normal;">1D - Project Reference</div><div class="t" style="left:618px;top:22.5px;font-size:22.9px;color:#8f8f8f;font-weight:normal;font-style:normal;">FRCDesignLib Rework</div><svg class="a" style="left:871px;top:22px" width="24" height="22" viewBox="0 0 24 22">
<path d="M10,14 L14,8" stroke="#333" stroke-width="2.4" stroke-linecap="round"/>
<path d="M8,10 L5,13.5 a3.6,3.6 0 0 0 5.2,5 L13,15.5" fill="none" stroke="#333" stroke-width="2.4" stroke-linecap="round"/>
<path d="M16,12 L19,8.5 a3.6,3.6 0 0 0 -5.2,-5 L11,6.5" fill="none" stroke="#333" stroke-width="2.4" stroke-linecap="round"/>
</svg><svg class="a" style="left:908px;top:22px" width="28" height="21" viewBox="0 0 28 21">
<path d="M1,3 a2,2 0 0 1 2,-2 h7 l3,3 h12 a2,2 0 0 1 2,2 v12 a2,2 0 0 1 -2,2 h-22 a2,2 0 0 1 -2,-2z" fill="none" stroke="#9a9a9a" stroke-width="1.8"/>
</svg><div class="t" style="left:944px;top:21px;font-size:23px;color:#8a8a8a;font-weight:normal;font-style:normal;">Stage 1</div><svg class="a" style="left:1100px;top:19px" width="26" height="22" viewBox="0 0 26 22">
<polygon points="13,1 25,7 13,13 1,7" fill="#1f5bbf"/>
<path d="M5,10 v6 q8,5 16,0 v-6 l-8,4z" fill="#1f5bbf"/>
<rect x="2" y="7" width="1.8" height="11" fill="#1f5bbf"/>
</svg><svg class="a" style="left:1138px;top:16px" width="28" height="28" viewBox="0 0 28 28">
<circle cx="14" cy="14" r="12.6" fill="none" stroke="#333" stroke-width="1.8"/>
<path d="M7,4.5 Q10,3 12,3.5 L11,6 Q13,7 12,9 L14,11 Q12,13 9.5,12 Q8,14 10,16 L7,14 Q5,11 4,9 Q5,6 7,4.5z" fill="#333"/>
<path d="M13,16 Q16,15 18,17 Q20,19 18,22 L16,25.5 Q14,26 13.5,25 L13.5,21 Q12,19 13,16z" fill="#333"/>
<path d="M22,7 Q24,9 24.5,11 L22.5,11 Q21.5,9 22,7z" fill="#333"/>
</svg><svg class="a" style="left:1180px;top:17px" width="28" height="24" viewBox="0 0 28 24">
<path d="M2,3 h6 v2 h-4 v16 h10 v2 h-12z" fill="#333"/>
<path d="M9,1 h9 l6,6 v16 h-15z" fill="none" stroke="#333" stroke-width="2.2"/>
<path d="M17,1 v7 h7" fill="none" stroke="#333" stroke-width="2"/>
</svg><div class="t" style="left:1219px;top:23px;font-size:20.5px;color:#333;font-weight:normal;font-style:normal;">223</div><svg class="a" style="left:1280px;top:14px" width="13" height="29" viewBox="0 0 13 29">
<rect x="5" y="0" width="3" height="3" fill="#333"/><rect x="5" y="5" width="3" height="3" fill="#333"/>
<circle cx="6.5" cy="14.5" r="5.2" fill="#333"/>
<rect x="5" y="21" width="3" height="3" fill="#333"/><rect x="5" y="26" width="3" height="3" fill="#333"/>
</svg><div class="t" style="left:1311px;top:23px;font-size:20.5px;color:#333;font-weight:normal;font-style:normal;">3</div><svg class="a" style="left:1344px;top:14px" width="29" height="29" viewBox="0 0 29 29">
<path d="M1.5,12 H7 L12,5 Q13,1.5 15.5,1.5 Q18.5,1.5 17.5,6 L16.5,10 H24.5 Q27.5,10 27,13.5 Q28,15 26.5,17 Q27.5,19 25.5,21 Q26,24 23,25 Q22,27.5 19,27.5 H7 Q4,27.5 1.5,25z" fill="none" stroke="#333" stroke-width="2.2" stroke-linejoin="round"/>
</svg><div class="t" style="left:1382px;top:23px;font-size:20.5px;color:#333;font-weight:normal;font-style:normal;">1</div><svg class="a" style="left:2026px;top:19px" width="32" height="29" viewBox="0 0 32 29">
<path d="M8,1 q-4,0 -4,4 v6 q0,3 -3,3.5 q3,0.5 3,3.5 v6 q0,4 4,4" fill="none" stroke="#333" stroke-width="2.6"/>
<path d="M24,1 q4,0 4,4 v6 q0,3 3,3.5 q-3,0.5 -3,3.5 v6 q0,4 -4,4" fill="none" stroke="#333" stroke-width="2.6"/>
<path d="M9.5,13 l5,5 l8,-8" fill="none" stroke="#333" stroke-width="3.8"/>
</svg><svg class="a" style="left:2076px;top:16px" width="32" height="32" viewBox="0 0 32 32">
<path d="M15,3 q-9,0 -9,10 v8 l-3,4 h24 l-3,-4 v-8 q0,-10 -9,-10z" fill="#333"/>
<path d="M11,27 q4,5 8,0z" fill="#333"/>
</svg><div class="a" style="left:2089px;top:9px;width:25px;height:24px;background:#1f56b9;border-radius:4px;border:1.5px solid #eaeaea"></div><div class="t" style="left:2096px;top:13px;font-size:17px;color:#fff;font-weight:bold;font-style:normal;">1</div><svg class="a" style="left:2126px;top:19px" width="25" height="28" viewBox="0 0 25 28">
<rect x="1.2" y="1.2" width="22.6" height="25.6" rx="2" fill="none" stroke="#333" stroke-width="2.2"/>
<path d="M4,7 l2,2 l3,-4 M4,14 l2,2 l3,-4 M4,21 l2,2 l3,-4" fill="none" stroke="#333" stroke-width="1.8"/>
<path d="M11,7.5 h9 M11,14.5 h9 M11,21.5 h9" stroke="#333" stroke-width="2"/>
</svg><svg class="a" style="left:2172px;top:19px" width="29" height="29" viewBox="0 0 29 29">
<rect x="1.2" y="1.2" width="10" height="10" fill="none" stroke="#333" stroke-width="2.4"/>
<rect x="1.2" y="17.5" width="10" height="10" fill="none" stroke="#333" stroke-width="2.4"/>
<rect x="17.5" y="17.5" width="10" height="10" fill="none" stroke="#333" stroke-width="2.4"/>
<path d="M22.5,1 v10.5 M17.2,6.2 h10.5" stroke="#333" stroke-width="2.4"/>
</svg><svg class="a" style="left:2221px;top:19px" width="28" height="28" viewBox="0 0 28 28">
<g transform="translate(28 0) scale(-1 1)"><path d="M14,1 q12,0 13,11 q0,4 -3,6 v9 h-10 v-4 h-5 q-3,0 -3,-3 v-4 l-4,-1 l4,-6 q1,-8 8,-8z" fill="#333"/></g>
<g fill="#eaeaea"><circle cx="8.5" cy="13.5" r="3.4"/><circle cx="15" cy="7.5" r="2.6"/></g>
<g fill="#333"><circle cx="8.5" cy="13.5" r="1.3"/><circle cx="15" cy="7.5" r="1"/></g>
<g stroke="#eaeaea" stroke-width="1.6"><path d="M8.5,8.8 V18.2 M3.8,13.5 H13.2 M5.2,10.2 L11.8,16.8 M11.8,10.2 L5.2,16.8"/><path d="M15,4 V11 M11.5,7.5 H18.5 M12.5,5 L17.5,10 M17.5,5 L12.5,10" stroke-width="1.2"/></g>
<g fill="#eaeaea"><circle cx="8.5" cy="13.5" r="2.6"/><circle cx="15" cy="7.5" r="2"/></g>
<g fill="#333"><circle cx="8.5" cy="13.5" r="1.2"/><circle cx="15" cy="7.5" r="0.9"/></g>
</svg><div class="a" style="left:2264px;top:4px;width:88px;height:48px;background:#1f56b9;border-radius:7px"></div><div class="t" style="left:2281px;top:20.5px;font-size:21.5px;color:#fff;font-weight:bold;font-style:normal;">Share</div><svg class="a" style="left:2367px;top:18px" width="30" height="30" viewBox="0 0 30 30">
<circle cx="15" cy="15" r="14.5" fill="#333"/>
<path d="M10.5,11 q0,-5 4.5,-5 q5,0 5,4.5 q0,3 -3,4.5 q-1.5,1 -1.5,3 v1" fill="none" stroke="#eaeaea" stroke-width="3"/>
<circle cx="15.3" cy="23" r="1.9" fill="#eaeaea"/>
</svg><svg class="a" style="left:2405px;top:29px" width="13" height="7" viewBox="0 0 13 7"><polygon points="0,0 13,0 6.5,7" fill="#333"/></svg><svg class="a" style="left:2436px;top:15px" width="38" height="37" viewBox="0 0 38 37">
<rect width="38" height="37" rx="3" fill="#a89c8c"/>
<rect x="0" y="0" width="38" height="12" fill="#c8bfb4"/>
<polygon points="2,22 30,10 36,18 8,32" fill="#6b5a48"/>
<polygon points="6,22 28,13 32,18 10,28" fill="#8a7866"/>
<rect x="14" y="17" width="6" height="4" fill="#2a8ad8"/>
<rect x="24" y="15" width="6" height="4" fill="#2a8ad8"/>
<rect x="0" y="30" width="38" height="7" fill="#9a8f80"/>
</svg><div class="t" style="left:2481px;top:21.5px;font-size:21.5px;color:#333;font-weight:normal;font-style:normal;">Kelly</div><svg class="a" style="left:2537px;top:29px" width="13" height="7" viewBox="0 0 13 7"><polygon points="0,0 13,0 6.5,7" fill="#333"/></svg><div class="a" style="left:0px;top:60px;width:2558px;height:54px;background:#fff"></div><div class="a" style="left:60px;top:113px;width:309px;height:1.5px;background:#d2d2d2"></div><div class="a" style="left:0px;top:60px;width:59px;height:1334px;background:#f7f7f7;border-right:1px solid #dcdcdc"></div><div class="a" style="left:0px;top:59.5px;width:59px;height:1.2px;background:#d8d8d8"></div><svg class="a" style="left:14.5px;top:73.0px" width="31" height="28" viewBox="0 0 31 28"><circle cx="5.5" cy="5.5" r="4" fill="none" stroke="#333" stroke-width="2.4"/><path d="M5.5,9.5 V24 M5.5,19 H11 Q15,19 15,13" fill="none" stroke="#333" stroke-width="2.4"/><circle cx="15" cy="12" r="2.6" fill="#333"/><circle cx="5.5" cy="24" r="2.6" fill="#333"/><path d="M15,3 H30 M18,10.3 H30 M18,17.6 H30 M15,25 H30" stroke="#333" stroke-width="3"/></svg><svg class="a" style="left:74.0px;top:76.0px" width="22" height="22" viewBox="0 0 22 22"><path d="M1,7 L9,0 V4.5 Q20,5 20,15 Q20,19 18,22 Q18,11 9,11 V14z" fill="#333"/></svg><svg class="a" style="left:126.0px;top:76.0px" width="22" height="22" viewBox="0 0 22 22"><path d="M21,7 L13,0 V4.5 Q2,5 2,15 Q2,19 4,22 Q4,11 13,11 V14z" fill="#9a9a9a"/></svg><div class="a" style="left:165.0px;top:68px;width:3px;height:38px;background:#d3d3d3"></div><svg class="a" style="left:180.0px;top:74.0px" width="28" height="26" viewBox="0 0 28 26"><path d="M4,21 L21,3 Q23,1 25,3 Q27,5 25,7 L8,25 L3,26z" fill="none" stroke="#333" stroke-width="1.6"/><path d="M4,21 L8,25 M19,5 L23,9" stroke="#333" stroke-width="1.4"/><rect x="0" y="24.8" width="28" height="1.2" fill="#2a56b0"/></svg><div class="t" style="left:216px;top:78.5px;font-size:21.7px;color:#333;font-weight:normal;font-style:normal;">Sketch</div><svg class="a" style="left:308.0px;top:73.5px" width="28" height="27" viewBox="0 0 28 27"><polygon points="1.5,5.0 5.0,1.5 26.0,1.5 26.0,22.5 22.5,26.0 1.5,26.0" fill="#fff" stroke="#333" stroke-width="1.6" stroke-linejoin="round"/><polyline points="1.5,5.0 22.5,5.0 26.0,1.5" fill="none" stroke="#333" stroke-width="1.1199999999999999"/><line x1="22.5" y1="5.0" x2="22.5" y2="26.0" stroke="#333" stroke-width="1.1199999999999999"/><polygon points="9,14 12,11 23,11 23,23.5 20,26 9,26" fill="#8e8e8e" stroke="#333" stroke-width="1.2"/></svg><svg class="a" style="left:359.0px;top:73.0px" width="28" height="28" viewBox="0 0 28 28"><path d="M17,4 A11,11 0 1 0 17,24 L15,19 A6,6 0 1 1 15,9z" fill="#8e8e8e" stroke="#333" stroke-width="1.5"/><ellipse cx="17.5" cy="7" rx="3" ry="2.2" fill="#fff" stroke="#333" stroke-width="1"/><ellipse cx="17.5" cy="21" rx="3" ry="2.2" fill="#fff" stroke="#333" stroke-width="1"/><path d="M2,14 H27" stroke="#333" stroke-width="1" stroke-dasharray="3 2"/></svg><svg class="a" style="left:409.0px;top:72.5px" width="30" height="29" viewBox="0 0 30 29"><path d="M3,25 Q1,16 8,13 Q13,11 17,11 Q20,10 21,5 L28,4 Q29,12 25,15 Q21,19 14,19 Q11,19 10,24 Q8,29 3,25z" fill="#8e8e8e" stroke="#333" stroke-width="1.5"/><ellipse cx="24.5" cy="4.5" rx="4" ry="3" fill="#fff" stroke="#333" stroke-width="1.3"/></svg><svg class="a" style="left:461.0px;top:73.0px" width="28" height="28" viewBox="0 0 28 28"><path d="M6,4 Q14,1 22,4 L24,22 L14,26 L3,22z" fill="#8e8e8e" stroke="#333" stroke-width="1.5"/><ellipse cx="14" cy="4" rx="8" ry="3" fill="#fff" stroke="#333" stroke-width="1.3"/></svg><div class="a" style="left:505.5px;top:68px;width:3px;height:38px;background:#d3d3d3"></div><svg class="a" style="left:517.5px;top:73.0px" width="29" height="28" viewBox="0 0 29 28"><path d="M1.5,26 V10 Q1.5,1.5 10,1.5 H23 L27,5.5 V26z" fill="#fff" stroke="#333" stroke-width="1.6"/><path d="M3,11 Q3,4 10,4 L16,4 L14,9 Q7,9 6,15z" fill="#8e8e8e"/><path d="M6,15 V26" stroke="#333" stroke-width="1"/></svg><svg class="a" style="left:561.5px;top:82.5px" width="15" height="9" viewBox="0 0 15 9"><polyline points="1.5,1.5 7.5,7.5 13.5,1.5" fill="none" stroke="#333" stroke-width="2.6"/></svg><svg class="a" style="left:595.5px;top:73.0px" width="29" height="28" viewBox="0 0 29 28"><path d="M1.5,26 V12 L11,1.5 H23 L27,5.5 V26z" fill="#fff" stroke="#333" stroke-width="1.6"/><polygon points="2,12 11,2 17,2 7,15" fill="#8e8e8e"/><path d="M5,15 V26" stroke="#333" stroke-width="1"/></svg><svg class="a" style="left:647.0px;top:73.0px" width="28" height="28" viewBox="0 0 28 28"><polygon points="1.5,4.5 4.5,1.5 26.5,1.5 26.5,23.5 23.5,26.5 1.5,26.5" fill="#fff" stroke="#333" stroke-width="1.6" stroke-linejoin="round"/><polyline points="1.5,4.5 23.5,4.5 26.5,1.5" fill="none" stroke="#333" stroke-width="1.1199999999999999"/><line x1="23.5" y1="4.5" x2="23.5" y2="26.5" stroke="#333" stroke-width="1.1199999999999999"/><circle cx="13.5" cy="16" r="7.5" fill="#8e8e8e" stroke="#333" stroke-width="1.3"/><circle cx="12.5" cy="15" r="4" fill="none" stroke="#333" stroke-width="1.2"/></svg><div class="a" style="left:687.5px;top:68px;width:3px;height:38px;background:#d3d3d3"></div><svg class="a" style="left:704.0px;top:73.0px" width="28" height="28" viewBox="0 0 28 28"><rect x="1.5" y="1.5" width="12" height="12" fill="#fff" stroke="#333" stroke-width="1.6"/><rect x="14.5" y="1.5" width="12" height="12" fill="#8e8e8e" stroke="#333" stroke-width="1.6"/><rect x="1.5" y="14.5" width="12" height="12" fill="#8e8e8e" stroke="#333" stroke-width="1.6"/><rect x="14.5" y="14.5" width="12" height="12" fill="#8e8e8e" stroke="#333" stroke-width="1.6"/></svg><svg class="a" style="left:754.0px;top:74.0px" width="30" height="26" viewBox="0 0 30 26"><circle cx="12" cy="5" r="3.5" fill="#fff" stroke="#333" stroke-width="1.3"/><circle cx="15" cy="5" r="3.5" fill="#fff" stroke="#333" stroke-width="1.3"/><circle cx="5" cy="14" r="3.5" fill="#8e8e8e" stroke="#333" stroke-width="1.3"/><circle cx="8" cy="15" r="3.5" fill="#8e8e8e" stroke="#333" stroke-width="1.3"/><circle cx="21" cy="11" r="3.5" fill="#8e8e8e" stroke="#333" stroke-width="1.3"/><circle cx="24" cy="12" r="3.5" fill="#8e8e8e" stroke="#333" stroke-width="1.3"/><circle cx="15" cy="21" r="3.5" fill="#8e8e8e" stroke="#333" stroke-width="1.3"/><circle cx="18" cy="22" r="3.5" fill="#8e8e8e" stroke="#333" stroke-width="1.3"/></svg><svg class="a" style="left:806.0px;top:73.0px" width="28" height="28" viewBox="0 0 28 28"><path d="M1.5,4 L4,1.5 H9 V10 L13,15 V26.5 H4 L1.5,24z" fill="#fff" stroke="#333" stroke-width="1.6"/><path d="M16,4 L18,1.5 H24 L26.5,4 V26.5 H16 V15 L19,10z" fill="#8e8e8e" stroke="#333" stroke-width="1.6"/></svg><div class="a" style="left:846.5px;top:68px;width:3px;height:38px;background:#d3d3d3"></div><svg class="a" style="left:862.0px;top:73.0px" width="28" height="28" viewBox="0 0 28 28"><path d="M2,18 L6,14 H12 V9 L16,5 H23 L27,9 V27 H7 L2,24z" fill="#fff" stroke="#333" stroke-width="1.6"/><path d="M2,4 Q12,0 13,12" fill="none" stroke="#333" stroke-width="2.2"/><polygon points="8,10 18,10 13,16" fill="#333"/></svg><svg class="a" style="left:913.0px;top:73.0px" width="30" height="28" viewBox="0 0 30 28"><polygon points="9.5,3.5 12.0,1 21.0,1 21.0,10 18.5,12.5 9.5,12.5" fill="#fff" stroke="#333" stroke-width="1.3" stroke-linejoin="round"/><polyline points="9.5,3.5 18.5,3.5 21.0,1" fill="none" stroke="#333" stroke-width="0.9099999999999999"/><line x1="18.5" y1="3.5" x2="18.5" y2="12.5" stroke="#333" stroke-width="0.9099999999999999"/><polygon points="1,16.5 3.5,14 12.5,14 12.5,23 10,25.5 1,25.5" fill="#fff" stroke="#333" stroke-width="1.3" stroke-linejoin="round"/><polyline points="1,16.5 10,16.5 12.5,14" fill="none" stroke="#333" stroke-width="0.9099999999999999"/><line x1="10" y1="16.5" x2="10" y2="25.5" stroke="#333" stroke-width="0.9099999999999999"/><polygon points="17,16.5 19.5,14 28.5,14 28.5,23 26,25.5 17,25.5" fill="#fff" stroke="#333" stroke-width="1.3" stroke-linejoin="round"/><polyline points="17,16.5 26,16.5 28.5,14" fill="none" stroke="#333" stroke-width="0.9099999999999999"/><line x1="26" y1="16.5" x2="26" y2="25.5" stroke="#333" stroke-width="0.9099999999999999"/></svg><svg class="a" style="left:964.0px;top:76.0px" width="30" height="22" viewBox="0 0 30 22"><circle cx="9" cy="11" r="8.5" fill="#fff" stroke="#333" stroke-width="1.6"/><circle cx="20" cy="11" r="8.5" fill="#8e8e8e" stroke="#333" stroke-width="1.6"/><path d="M14.5,4.5 A8.5,8.5 0 0 1 14.5,17.5" fill="none" stroke="#333" stroke-width="1.2"/></svg><svg class="a" style="left:1016.0px;top:73.0px" width="28" height="28" viewBox="0 0 28 28"><circle cx="14" cy="14" r="12.8" fill="#fff" stroke="#333" stroke-width="1.6"/><circle cx="14" cy="14" r="9.5" fill="#fff" stroke="#333" stroke-width="1.5"/><path d="M14,4.5 V14 H23.5 A9.5,9.5 0 0 0 14,4.5z" fill="#e8e8e8"/><path d="M14,4.5 V14 H23.5" fill="none" stroke="#333" stroke-width="1.5"/></svg><div class="t" style="left:1064px;top:72px;font-size:27px;color:#333;font-weight:bold;font-style:normal;">(<i style='font-family:Liberation Serif;font-weight:bold'>x</i>)</div><svg class="a" style="left:1120.0px;top:74.0px" width="26" height="26" viewBox="0 0 26 26"><polygon points="1.5,1.5 24.5,5 24.5,25 1.5,21" fill="#d8d8d8" stroke="#333" stroke-width="1.6"/><polyline points="13,3.5 13,13 24.5,14.5" fill="none" stroke="#333" stroke-width="1.5"/></svg><svg class="a" style="left:1168.5px;top:74.5px" width="29" height="25" viewBox="0 0 29 25"><polygon points="1.5,5.0 5.0,1.5 27.0,1.5 27.0,20.5 23.5,24.0 1.5,24.0" fill="#fff" stroke="#333" stroke-width="1.6" stroke-linejoin="round"/><polyline points="1.5,5.0 23.5,5.0 27.0,1.5" fill="none" stroke="#333" stroke-width="1.1199999999999999"/><line x1="23.5" y1="5.0" x2="23.5" y2="24.0" stroke="#333" stroke-width="1.1199999999999999"/><path d="M1,15 Q8,12 13,15 Q19,18 27,14" fill="none" stroke="#9a9a9a" stroke-width="2"/></svg><svg class="a" style="left:1219.5px;top:73.0px" width="29" height="28" viewBox="0 0 29 28"><polygon points="1.5,17.5 4.0,15 13.0,15 13.0,24 10.5,26.5 1.5,26.5" fill="#fff" stroke="#333" stroke-width="1.3" stroke-linejoin="round"/><polyline points="1.5,17.5 10.5,17.5 13.0,15" fill="none" stroke="#333" stroke-width="0.9099999999999999"/><line x1="10.5" y1="17.5" x2="10.5" y2="26.5" stroke="#333" stroke-width="0.9099999999999999"/><rect x="15" y="3" width="9" height="9" transform="rotate(45 19.5 7.5)" fill="#8e8e8e" stroke="#333" stroke-width="1.3"/><path d="M4,12 Q5,4 11,2" fill="none" stroke="#333" stroke-width="1.8"/><polygon points="9,0 14,1 10,5" fill="#333"/><path d="M25,16 Q25,23 19,26" fill="none" stroke="#333" stroke-width="1.8"/><polygon points="16,24 21,28 22,23" fill="#333"/></svg><svg class="a" style="left:1264.5px;top:82.5px" width="15" height="9" viewBox="0 0 15 9"><polyline points="1.5,1.5 7.5,7.5 13.5,1.5" fill="none" stroke="#333" stroke-width="2.6"/></svg><svg class="a" style="left:1299.0px;top:73.0px" width="28" height="28" viewBox="0 0 28 28"><polygon points="2,3 4,1 20,1 22,3 22,21 2,21" fill="#9a9a9a"/><rect x="3" y="3" width="2" height="18" fill="#d0d0d0"/><circle cx="19" cy="19" r="8.5" fill="#333" stroke="#fff" stroke-width="1.2"/><path d="M15.5,15.5 L22.5,22.5 M22.5,15.5 L15.5,22.5" stroke="#fff" stroke-width="2"/></svg><div class="a" style="left:1339.5px;top:68px;width:3px;height:38px;background:#d3d3d3"></div><svg class="a" style="left:1355.0px;top:73.5px" width="28" height="27" viewBox="0 0 28 27"><path d="M1.5,16 Q10,10 22,14 L26,18 V25 L23,26 H4 L1.5,23z" fill="#fff" stroke="#333" stroke-width="1.6"/><path d="M2,16 Q10,11 22,14 L26,18 Q14,14 4,19z" fill="#8e8e8e"/><path d="M14,2 L9,8 H12.5 V15 H15.5 V8 H19z" fill="#333"/></svg><svg class="a" style="left:1406.0px;top:73.0px" width="28" height="28" viewBox="0 0 28 28"><polygon points="1.5,18 4.5,15 26.5,15 26.5,24 23.5,27 1.5,27" fill="#fff" stroke="#333" stroke-width="1.6" stroke-linejoin="round"/><polyline points="1.5,18 23.5,18 26.5,15" fill="none" stroke="#333" stroke-width="1.1199999999999999"/><line x1="23.5" y1="18" x2="23.5" y2="27" stroke="#333" stroke-width="1.1199999999999999"/><path d="M4,4 Q12,0 22,2 L26,9 Q16,6 6,11z" fill="#8e8e8e"/></svg><svg class="a" style="left:1455.0px;top:73.0px" width="30" height="28" viewBox="0 0 30 28"><path d="M2,14 Q4,4 14,2 Q20,1 22,6 L24,10 Q12,10 8,24 Q3,21 2,14z" fill="#8e8e8e"/><path d="M12,18 Q18,14 22,12 L28,16 Q22,20 18,26z" fill="#fff" stroke="#333" stroke-width="1.4"/><polygon points="11,9 19,9 16,11 22,17 20,19 14,13 12,16" fill="#333"/></svg><svg class="a" style="left:1508.0px;top:73.5px" width="28" height="27" viewBox="0 0 28 27"><path d="M1,8 Q8,2 20,2 L24,12 Q10,12 12,24 Q2,18 1,8z" fill="#9a9a9a"/><circle cx="19" cy="19" r="8" fill="#333" stroke="#fff" stroke-width="1.2"/><path d="M15.8,15.8 L22.2,22.2 M22.2,15.8 L15.8,22.2" stroke="#fff" stroke-width="2"/></svg><div class="a" style="left:1548.5px;top:68px;width:3px;height:38px;background:#d3d3d3"></div><svg class="a" style="left:1566.0px;top:73.0px" width="26" height="28" viewBox="0 0 26 28"><polygon points="13,1.5 24.5,7.5 24.5,20.5 13,26.5 1.5,20.5 1.5,7.5" fill="#e0e0e0" stroke="#333" stroke-width="1.6" stroke-linejoin="round"/><polyline points="1.5,7.5 13,13.5 24.5,7.5" fill="none" stroke="#333" stroke-width="1.3"/><line x1="13" y1="13.5" x2="13" y2="26.5" stroke="#333" stroke-width="1.3"/><polygon points="13,13.5 24.5,7.5 24.5,20.5 13,26.5" fill="#c8c8c8"/><polyline points="13,13.5 24.5,7.5 24.5,20.5 13,26.5 13,13.5" fill="none" stroke="#333" stroke-width="1.3"/></svg><svg class="a" style="left:1617.0px;top:73.5px" width="26" height="27" viewBox="0 0 26 27"><polygon points="3,1 22,1 25,4 25,26 6,26 1,22 1,4" fill="#fff" stroke="#333" stroke-width="1.4"/><rect x="6" y="5" width="18" height="20" fill="#8a8a8a"/><path d="M15,5 V25 M6,15 H24" stroke="#666" stroke-width="1"/></svg><svg class="a" style="left:1667.5px;top:73.0px" width="27" height="28" viewBox="0 0 27 28"><polygon points="13.5,1 26,6 26,21 13.5,27 1,21 1,6" fill="#b0b0b0" stroke="#666" stroke-width="1.2"/><polygon points="13.5,1 26,6 13.5,11 1,6" fill="#d8d8d8"/><ellipse cx="13.5" cy="6" rx="6" ry="3" fill="#777"/><path d="M8,13 V25 M19,13 V25" stroke="#ddd" stroke-width="2"/></svg><svg class="a" style="left:1717.0px;top:72.0px" width="30" height="30" viewBox="0 0 30 30"><path d="M9,5 Q7,2 9,0 M21,5 Q23,2 21,0 M11,5 Q10,3 11,1 M19,5 Q20,3 19,1" fill="none" stroke="#333" stroke-width="0.9"/><circle cx="15" cy="3" r="2" fill="#333"/><rect x="14.3" y="4" width="1.4" height="5" fill="#333"/><polygon points="3,10 27,7 28,25 4,28" fill="#333"/><rect x="1" y="14" width="3" height="6" fill="#333"/><rect x="26" y="12" width="3" height="6" fill="#333"/><circle cx="10" cy="16" r="3.5" fill="#fff"/><circle cx="20" cy="15" r="3.5" fill="#fff"/><circle cx="10.5" cy="16.5" r="1.5" fill="#333"/><circle cx="19.5" cy="15.5" r="1.5" fill="#333"/><path d="M11,22 Q16,26 20,20" fill="none" stroke="#fff" stroke-width="1.8"/></svg><svg class="a" style="left:1768.0px;top:72.0px" width="30" height="30" viewBox="0 0 30 30"><path d="M9,5 Q7,2 9,0 M21,5 Q23,2 21,0 M11,5 Q10,3 11,1 M19,5 Q20,3 19,1" fill="none" stroke="#333" stroke-width="0.9"/><circle cx="15" cy="3" r="2" fill="#333"/><rect x="14.3" y="4" width="1.4" height="5" fill="#333"/><polygon points="3,10 27,7 28,25 4,28" fill="#333"/><rect x="1" y="14" width="3" height="6" fill="#333"/><rect x="26" y="12" width="3" height="6" fill="#333"/><circle cx="10" cy="16" r="3.5" fill="#fff"/><circle cx="20" cy="15" r="3.5" fill="#fff"/><circle cx="10.5" cy="16.5" r="1.5" fill="#333"/><circle cx="19.5" cy="15.5" r="1.5" fill="#333"/><path d="M11,22 Q16,26 20,20" fill="none" stroke="#fff" stroke-width="1.8"/></svg><svg class="a" style="left:1819.0px;top:72.0px" width="30" height="30" viewBox="0 0 30 30"><path d="M15,1 L28,22 L10,29 Q1,27 2,20z" fill="#fff" stroke="#333" stroke-width="1.3"/><circle cx="17" cy="6" r="5.5" fill="#8e8e8e" stroke="#666" stroke-width="1"/><circle cx="7" cy="22" r="6.5" fill="#8e8e8e" stroke="#666" stroke-width="1"/><circle cx="24" cy="20" r="3.5" fill="#8e8e8e" stroke="#666" stroke-width="1"/></svg><svg class="a" style="left:1870.0px;top:72.0px" width="30" height="30" viewBox="0 0 30 30"><rect x="12.2" y="0.5" width="5.6" height="6" fill="#8a8a8a" stroke="#333" stroke-width="1.2" transform="rotate(0 15 15)"/><rect x="12.2" y="0.5" width="5.6" height="6" fill="#8a8a8a" stroke="#333" stroke-width="1.2" transform="rotate(45 15 15)"/><rect x="12.2" y="0.5" width="5.6" height="6" fill="#8a8a8a" stroke="#333" stroke-width="1.2" transform="rotate(90 15 15)"/><rect x="12.2" y="0.5" width="5.6" height="6" fill="#8a8a8a" stroke="#333" stroke-width="1.2" transform="rotate(135 15 15)"/><rect x="12.2" y="0.5" width="5.6" height="6" fill="#8a8a8a" stroke="#333" stroke-width="1.2" transform="rotate(180 15 15)"/><rect x="12.2" y="0.5" width="5.6" height="6" fill="#8a8a8a" stroke="#333" stroke-width="1.2" transform="rotate(225 15 15)"/><rect x="12.2" y="0.5" width="5.6" height="6" fill="#8a8a8a" stroke="#333" stroke-width="1.2" transform="rotate(270 15 15)"/><rect x="12.2" y="0.5" width="5.6" height="6" fill="#8a8a8a" stroke="#333" stroke-width="1.2" transform="rotate(315 15 15)"/><circle cx="15" cy="15" r="10" fill="#8a8a8a" stroke="#333" stroke-width="1.3"/><circle cx="15" cy="15" r="4.2" fill="#fff" stroke="#333" stroke-width="1"/></svg><svg class="a" style="left:1921.0px;top:72.0px" width="30" height="30" viewBox="0 0 30 30"><path d="M0,0 H6 L9,4 L6,7 z M30,0 H24 L21,4 L24,7z" fill="#777"/><circle cx="15" cy="14" r="9" fill="none" stroke="#777" stroke-width="5"/><rect x="0" y="24" width="30" height="5" fill="#777"/><rect x="12" y="21" width="6" height="4" fill="#777"/></svg><svg class="a" style="left:1973.0px;top:76.0px" width="28" height="22" viewBox="0 0 28 22"><path d="M3,2.5 Q1,5 3,7 L22,19.5 Q25,21 26.5,18.5 Q27.5,16 25,14.5 L6,2 Q4.5,1 3,2.5z" fill="#333"/><path d="M8,5.5 L10,8.5 M19,12.5 L21,15.5" stroke="#fff" stroke-width="0.9"/></svg><div class="a" style="left:2014.5px;top:68px;width:3px;height:38px;background:#d3d3d3"></div><svg class="a" style="left:2029.5px;top:75.0px" width="29" height="24" viewBox="0 0 29 24"><rect x="1" y="3" width="27" height="19" rx="3" fill="#fff" stroke="#333" stroke-width="2"/><path d="M1,10 V5 Q1,3 4,3 H25 Q28,3 28,5 V10z" fill="#333"/><rect x="4" y="12" width="21" height="7" fill="#fff"/><text x="14.5" y="9" font-size="5" fill="#fff" text-anchor="middle" font-family="Liberation Sans" font-weight="bold">HELLO</text></svg><svg class="a" style="left:2073.5px;top:82.5px" width="15" height="9" viewBox="0 0 15 9"><polyline points="1.5,1.5 7.5,7.5 13.5,1.5" fill="none" stroke="#333" stroke-width="2.6"/></svg><div class="a" style="left:2098.5px;top:68px;width:3px;height:38px;background:#d3d3d3"></div><svg class="a" style="left:2113.0px;top:73.0px" width="30" height="28" viewBox="0 0 30 28"><path d="M6,1 Q3,1 3,4 V10 Q3,13 1,13 Q3,13 3,16 V24 Q3,27 6,27" fill="none" stroke="#333" stroke-width="1.6"/><path d="M24,14 Q27,14 27,17 V24 Q27,27 24,27" fill="none" stroke="#333" stroke-width="1.6"/><polygon points="15,8 23,12 23,20 15,24 7,20 7,12" fill="#fff" stroke="#333" stroke-width="1.5"/><polyline points="7,12 15,16 23,12 M15,16 V24" fill="none" stroke="#333" stroke-width="1.2"/><circle cx="19" cy="5" r="2.5" fill="#333"/><line x1="19" y1="5" x2="19" y2="14" stroke="#333" stroke-width="1.5"/></svg><svg class="a" style="left:2149.5px;top:82.5px" width="15" height="9" viewBox="0 0 15 9"><polyline points="1.5,1.5 7.5,7.5 13.5,1.5" fill="none" stroke="#333" stroke-width="2.6"/></svg><div class="a" style="left:2198px;top:64px;width:239px;height:47px;background:#f1f1f1;border-radius:4px"></div><div class="t" style="left:2211px;top:77px;font-size:20.3px;color:#333;font-weight:normal;font-style:normal;">Search tools...</div><div class="a" style="left:2348px;top:76px;width:48px;height:28px;background:#f3f3f3;border:1px solid #bdbdbd;border-bottom:2px solid #a8a8a8;border-radius:3px"></div><div class="t" style="left:2352px;top:82px;font-size:16px;color:#444;font-weight:normal;font-style:normal;">alt/&#8997;</div><div class="a" style="left:2397px;top:76px;width:24px;height:28px;background:#f3f3f3;border:1px solid #bdbdbd;border-bottom:2px solid #a8a8a8;border-radius:3px"></div><div class="t" style="left:2404px;top:82px;font-size:17px;color:#444;font-weight:normal;font-style:normal;">c</div><svg class="a" style="left:18px;top:125px" width="26" height="30" viewBox="0 0 26 30"><rect x="5" y="0" width="3" height="3" fill="#333"/><rect x="5" y="5" width="3" height="3" fill="#333"/><circle cx="6.5" cy="15" r="5.3" fill="#333"/><rect x="5" y="22" width="3" height="3" fill="#333"/><rect x="5" y="27" width="3" height="3" fill="#333"/><path d="M19,17 V29 M13,23 H25" stroke="#1f56b9" stroke-width="3"/></svg><svg class="a" style="left:15px;top:177px" width="31" height="28" viewBox="0 0 31 28"><ellipse cx="15.5" cy="11" rx="14.5" ry="10" fill="#333"/><polygon points="5,17 4,27 13,19" fill="#333"/></svg><svg class="a" style="left:17px;top:230px" width="28" height="30" viewBox="0 0 28 30"><path d="M21,9 V27.5 H1.5 V1.5 H17" fill="none" stroke="#333" stroke-width="2.6"/><path d="M5,8 H13 M5,13 H13 M5,18 H11" stroke="#333" stroke-width="2.2"/><path d="M13,20 L14,16 L25,4 L28,7 L17,19z" fill="#333"/></svg><svg class="a" style="left:15px;top:281px" width="30" height="30" viewBox="0 0 30 30"><circle cx="17" cy="17" r="11" fill="none" stroke="#333" stroke-width="2.8"/><rect x="13" y="1" width="8" height="3" fill="#333"/><rect x="15.5" y="3" width="3" height="3" fill="#333"/><path d="M17,17 L22,11" stroke="#333" stroke-width="2.4"/><path d="M0,14 H6 M1,19 H6 M3,24 H8" stroke="#333" stroke-width="2"/></svg><svg class="a" style="left:15px;top:334px" width="31" height="32" viewBox="0 0 31 32"><circle cx="15" cy="15" r="14.5" fill="#333"/><polygon points="22,25 30,31 27,22" fill="#333"/><polygon points="15,5 24,10 24,20 15,25 6,20 6,10" fill="none" stroke="#fff" stroke-width="2.3"/><polygon points="15,10 19.5,12.5 19.5,17.5 15,20 10.5,17.5 10.5,12.5" fill="none" stroke="#fff" stroke-width="1.6"/></svg><div class="a" style="left:0px;top:376px;width:59px;height:1.2px;background:#d5d5d5"></div><svg class="a" style="left:17px;top:388px" width="26" height="30" viewBox="0 0 26 30"><rect x="1.3" y="1.3" width="23.4" height="27.4" rx="2" fill="none" stroke="#333" stroke-width="2.4"/><path d="M4,7 l2,2 l3,-4 M4,14 l2,2 l3,-4 M4,21 l2,2 l3,-4" fill="none" stroke="#333" stroke-width="1.8"/><path d="M11,8 H21 M11,15 H21 M11,22 H21" stroke="#333" stroke-width="2.2"/></svg><div class="a" style="left:59px;top:114px;width:310px;height:1280px;background:#fff;border-right:1px solid #d6d6d6"></div><svg class="a" style="left:75px;top:137px" width="26" height="24" viewBox="0 0 26 24"><path d="M1.5,1.5 H24.5 L15,12 V22.5 L11,20 V12z" fill="none" stroke="#333" stroke-width="1.8" stroke-linejoin="round"/></svg><div class="a" style="left:119px;top:126px;width:237px;height:44px;border:1.3px solid #c4c4c4;border-radius:5px;background:#fff"></div><div class="t" style="left:128px;top:139px;font-size:19.1px;color:#8a8a8a;font-weight:normal;font-style:italic;">Filter by name or type</div><div class="t" style="left:66px;top:184px;font-size:19.9px;color:#2c2c2c;font-weight:normal;font-style:normal;-webkit-text-stroke:0.55px #2c2c2c">Features (16)</div><svg class="a" style="left:218px;top:183px" width="30" height="22" viewBox="0 0 30 22"><path d="M1.5,3 Q1.5,1.5 3,1.5 H10 L13,4.5 H27 Q28.5,4.5 28.5,6 V20.5 H1.5z" fill="none" stroke="#333" stroke-width="1.6"/><path d="M8,8 V20 M2,14 H14" stroke="#1f56b9" stroke-width="3"/></svg><div class="a" style="left:268px;top:184px;width:6.5px;height:20px;background:#333"></div><div class="a" style="left:281px;top:184px;width:6.5px;height:20px;background:#333"></div><svg class="a" style="left:309px;top:180px" width="28" height="28" viewBox="0 0 28 28"><circle cx="14" cy="16" r="10.5" fill="none" stroke="#333" stroke-width="2.6"/><rect x="10" y="1" width="8" height="3" fill="#333"/><rect x="12.5" y="3" width="3" height="3" fill="#333"/><path d="M14,16 L18,21" stroke="#333" stroke-width="2.2"/></svg><div class="a" style="left:59px;top:216px;width:309px;height:682px;overflow:hidden"><svg class="a" style="left:38px;top:-17px" width="26" height="26" viewBox="0 0 26 26"><polygon points="1.6,0.6 22.8,4.3 22.8,22.5 1.6,18.7" fill="#ececec" stroke="#a0a0a0" stroke-width="1.5" stroke-linejoin="round"/><polyline points="12.4,2.5 12.4,12.8 22.8,14.6" fill="none" stroke="#a0a0a0" stroke-width="1.5"/></svg><div class="t" style="left:69px;top:-14px;font-size:19.8px;color:#9b9b9b">Top</div><svg class="a" style="left:38px;top:22px" width="26" height="26" viewBox="0 0 26 26"><polygon points="1.6,0.6 22.8,4.3 22.8,22.5 1.6,18.7" fill="#ececec" stroke="#a0a0a0" stroke-width="1.5" stroke-linejoin="round"/><polyline points="12.4,2.5 12.4,12.8 22.8,14.6" fill="none" stroke="#a0a0a0" stroke-width="1.5"/></svg><div class="t" style="left:69px;top:25px;font-size:19.8px;color:#9b9b9b">Front</div><svg class="a" style="left:38px;top:61px" width="26" height="26" viewBox="0 0 26 26"><polygon points="1.6,0.6 22.8,4.3 22.8,22.5 1.6,18.7" fill="#ececec" stroke="#a0a0a0" stroke-width="1.5" stroke-linejoin="round"/><polyline points="12.4,2.5 12.4,12.8 22.8,14.6" fill="none" stroke="#a0a0a0" stroke-width="1.5"/></svg><div class="t" style="left:69px;top:64px;font-size:19.8px;color:#9b9b9b">Right</div><svg class="a" style="left:38px;top:100px" width="26" height="26" viewBox="0 0 26 26"><polygon points="12,1.5 22.5,6.5 22.5,18.5 12,23.5 1.5,18.5 1.5,6.5" fill="#f4f4f4" stroke="#b0b0b0" stroke-width="1.4" stroke-linejoin="round"/><polyline points="1.5,6.5 12,11.5 22.5,6.5 M12,11.5 V23.5" fill="none" stroke="#b0b0b0" stroke-width="1.2"/></svg><div class="t" style="left:69px;top:103px;font-size:19.8px;color:#9b9b9b">Origin Cube</div><svg class="a" style="left:10px;top:103px" width="12" height="18" viewBox="0 0 12 18"><polyline points="2,1.5 10,9 2,16.5" fill="none" stroke="#555" stroke-width="2.4"/></svg><svg class="a" style="left:235px;top:98px" width="12" height="28" viewBox="0 0 12 28"><circle cx="6" cy="14" r="4.2" fill="#333"/><rect x="4.5" y="1" width="3" height="3" fill="#333"/><rect x="4.5" y="6" width="3" height="3" fill="#333"/><rect x="4.5" y="19" width="3" height="3" fill="#333"/><rect x="4.5" y="24" width="3" height="3" fill="#333"/></svg><svg class="a" style="left:38px;top:139px" width="26" height="26" viewBox="0 0 26 26"><path d="M2,17 L8,13.5 L14,16.5 V6.5 L19.5,3.5 L25,6.5 V19.5 L17,24 L2,19.5z" fill="#fff" stroke="#333" stroke-width="1.4" stroke-linejoin="round"/><path d="M2,17 L17,21.5 L25,17 M17,21.5 V24 M14,16.5 L17,18 M14,6.5 L19.5,9.5 L25,6.5 M19.5,9.5 V19.5" fill="none" stroke="#333" stroke-width="1"/><path d="M3,3.5 Q10,1 11.5,9" fill="none" stroke="#333" stroke-width="2"/><polygon points="7.5,8 15.5,7.5 11.8,13" fill="#333"/></svg><div class="t" style="left:69px;top:142px;font-size:19.8px;color:#2e2e2e">Layout Sketches</div><svg class="a" style="left:10px;top:142px" width="12" height="18" viewBox="0 0 12 18"><polyline points="2,1.5 10,9 2,16.5" fill="none" stroke="#555" stroke-width="2.4"/></svg><svg class="a" style="left:38px;top:178px" width="26" height="26" viewBox="0 0 26 26"><path d="M1,3 a1.5,1.5 0 0 1 1.5,-1.5 h7 l3,3 h11 a1.5,1.5 0 0 1 1.5,1.5 v13 a1.5,1.5 0 0 1 -1.5,1.5 h-21 a1.5,1.5 0 0 1 -1.5,-1.5z" fill="none" stroke="#555" stroke-width="1.5"/><path d="M1,6.5 H12" stroke="#555" stroke-width="1"/></svg><div class="t" style="left:69px;top:181px;font-size:19.8px;color:#2e2e2e">Tubes (3)</div><svg class="a" style="left:7px;top:184px" width="18" height="12" viewBox="0 0 18 12"><polyline points="1.5,2 9,10 16.5,2" fill="none" stroke="#555" stroke-width="2.4"/></svg><svg class="a" style="left:38px;top:217px" width="26" height="26" viewBox="0 0 26 26"><polygon points="2,3.5 4.5,1 19,1 21,3 21,19.5 18.5,21.5 2,21.5" fill="#fff" stroke="#333" stroke-width="1.2"/><rect x="5" y="4" width="7.5" height="8.5" fill="#b8b8b8"/><rect x="12.5" y="4" width="8" height="8.5" fill="#9a9a9a"/><rect x="5" y="12.5" width="7.5" height="8.5" fill="#a8a8a8"/><rect x="12.5" y="12.5" width="8" height="8.5" fill="#8a8a8a"/><path d="M2,3.5 L5,4 M2,21.5 L5,21" stroke="#333" stroke-width="1"/></svg><div class="t" style="left:69px;top:220px;font-size:19.8px;color:#2e2e2e">Tubes</div><svg class="a" style="left:235px;top:215px" width="12" height="28" viewBox="0 0 12 28"><circle cx="6" cy="14" r="4.2" fill="#333"/><rect x="4.5" y="1" width="3" height="3" fill="#333"/><rect x="4.5" y="6" width="3" height="3" fill="#333"/><rect x="4.5" y="19" width="3" height="3" fill="#333"/><rect x="4.5" y="24" width="3" height="3" fill="#333"/></svg><svg class="a" style="left:38px;top:256px" width="26" height="26" viewBox="0 0 26 26"><polygon points="1.5,5.5 5.5,0.8 24,5 24,21.5 20,24.5 1.5,20" fill="#fff" stroke="#333" stroke-width="1.5" stroke-linejoin="round"/><polyline points="1.5,5.5 19.5,9.5 24,5 M19.5,9.5 V24.5" fill="none" stroke="#333" stroke-width="1.2"/><g fill="#555"><ellipse cx="5.5" cy="10" rx="1.6" ry="2.2"/><ellipse cx="11.5" cy="11.5" rx="1.6" ry="2.2"/><ellipse cx="5.5" cy="16.5" rx="1.6" ry="2.2"/><ellipse cx="11.5" cy="18" rx="1.6" ry="2.2"/></g><polygon points="20.5,10 23,7.5 23,21 20.5,23" fill="#aaa"/><polygon points="21,20 23,11 23,20" fill="#ddd"/></svg><div class="t" style="left:69px;top:259px;font-size:19.8px;color:#2e2e2e">Frame Tubes</div><svg class="a" style="left:235px;top:254px" width="12" height="28" viewBox="0 0 12 28"><circle cx="6" cy="14" r="4.2" fill="#333"/><rect x="4.5" y="1" width="3" height="3" fill="#333"/><rect x="4.5" y="6" width="3" height="3" fill="#333"/><rect x="4.5" y="19" width="3" height="3" fill="#333"/><rect x="4.5" y="24" width="3" height="3" fill="#333"/></svg><svg class="a" style="left:38px;top:295px" width="26" height="26" viewBox="0 0 26 26"><polygon points="1.5,5.5 5.5,0.8 24,5 24,21.5 20,24.5 1.5,20" fill="#fff" stroke="#333" stroke-width="1.5" stroke-linejoin="round"/><polyline points="1.5,5.5 19.5,9.5 24,5 M19.5,9.5 V24.5" fill="none" stroke="#333" stroke-width="1.2"/><g fill="#555"><ellipse cx="5.5" cy="10" rx="1.6" ry="2.2"/><ellipse cx="11.5" cy="11.5" rx="1.6" ry="2.2"/><ellipse cx="5.5" cy="16.5" rx="1.6" ry="2.2"/><ellipse cx="11.5" cy="18" rx="1.6" ry="2.2"/></g><polygon points="20.5,10 23,7.5 23,21 20.5,23" fill="#aaa"/><polygon points="21,20 23,11 23,20" fill="#ddd"/></svg><div class="t" style="left:69px;top:298px;font-size:19.8px;color:#2e2e2e">Cross Tube</div><svg class="a" style="left:235px;top:293px" width="12" height="28" viewBox="0 0 12 28"><circle cx="6" cy="14" r="4.2" fill="#333"/><rect x="4.5" y="1" width="3" height="3" fill="#333"/><rect x="4.5" y="6" width="3" height="3" fill="#333"/><rect x="4.5" y="19" width="3" height="3" fill="#333"/><rect x="4.5" y="24" width="3" height="3" fill="#333"/></svg><svg class="a" style="left:38px;top:334px" width="26" height="26" viewBox="0 0 26 26"><path d="M1,3 a1.5,1.5 0 0 1 1.5,-1.5 h7 l3,3 h11 a1.5,1.5 0 0 1 1.5,1.5 v13 a1.5,1.5 0 0 1 -1.5,1.5 h-21 a1.5,1.5 0 0 1 -1.5,-1.5z" fill="none" stroke="#555" stroke-width="1.5"/><path d="M1,6.5 H12" stroke="#555" stroke-width="1"/></svg><div class="t" style="left:69px;top:337px;font-size:19.8px;color:#2e2e2e">Bellypan (5)</div><svg class="a" style="left:7px;top:340px" width="18" height="12" viewBox="0 0 18 12"><polyline points="1.5,2 9,10 16.5,2" fill="none" stroke="#555" stroke-width="2.4"/></svg><svg class="a" style="left:38px;top:373px" width="26" height="26" viewBox="0 0 26 26"><path d="M4,18 L17,3 Q19,1 21,3 Q23,5 21,7 L8,22 L3,23z" fill="none" stroke="#a8a8a8" stroke-width="1.3"/><path d="M4,18 L8,22" stroke="#a8a8a8" stroke-width="1.1"/><rect x="0" y="22.5" width="23" height="1.1" fill="#7a8cc8"/></svg><div class="t" style="left:69px;top:376px;font-size:19.8px;color:#9b9b9b">Bellypan</div><svg class="a" style="left:38px;top:412px" width="26" height="26" viewBox="0 0 26 26"><polygon points="1.5,4.5 4.5,1.5 20.5,1.5 23.5,4.5 23.5,22.5 20.5,24 1.5,24" fill="#fff" stroke="#333" stroke-width="1.4" stroke-linejoin="round"/><polyline points="1.5,4.5 20.5,4.5 23.5,1.5" fill="none" stroke="#333" stroke-width="1"/><line x1="20.5" y1="4.5" x2="20.5" y2="24" stroke="#333" stroke-width="1"/><polygon points="8,12 10.5,9.5 22.5,9.5 22.5,23 8,23" fill="#8e8e8e" stroke="#333" stroke-width="1.1"/><polyline points="8,12 20.5,12 22.5,9.5 M20.5,12 V23" fill="none" stroke="#555" stroke-width="0.9"/></svg><div class="t" style="left:69px;top:415px;font-size:19.8px;color:#2e2e2e">Bellypan</div><svg class="a" style="left:38px;top:451px" width="26" height="26" viewBox="0 0 26 26"><polygon points="12.5,1.5 23.5,6.5 23.5,19.5 12.5,24.5 1.5,19.5 1.5,6.5" fill="#c0c0c0" stroke="#888" stroke-width="1.2"/><polygon points="12.5,1.5 23.5,6.5 12.5,11.5 1.5,6.5" fill="#e0e0e0"/><ellipse cx="12.5" cy="6.8" rx="5" ry="2.4" fill="#888"/><path d="M6,12 V22 M19,12 V22" stroke="#e8e8e8" stroke-width="1.6"/></svg><div class="t" style="left:69px;top:454px;font-size:19.8px;color:#2e2e2e">Fillet Bellypan</div><svg class="a" style="left:235px;top:449px" width="12" height="28" viewBox="0 0 12 28"><circle cx="6" cy="14" r="4.2" fill="#333"/><rect x="4.5" y="1" width="3" height="3" fill="#333"/><rect x="4.5" y="6" width="3" height="3" fill="#333"/><rect x="4.5" y="19" width="3" height="3" fill="#333"/><rect x="4.5" y="24" width="3" height="3" fill="#333"/></svg><svg class="a" style="left:38px;top:490px" width="26" height="26" viewBox="0 0 26 26"><path d="M4,18 L17,3 Q19,1 21,3 Q23,5 21,7 L8,22 L3,23z" fill="none" stroke="#a8a8a8" stroke-width="1.3"/><path d="M4,18 L8,22" stroke="#a8a8a8" stroke-width="1.1"/><rect x="0" y="22.5" width="23" height="1.1" fill="#7a8cc8"/></svg><div class="t" style="left:69px;top:493px;font-size:19.8px;color:#9b9b9b">Rivet Holes</div><svg class="a" style="left:38px;top:529px" width="26" height="26" viewBox="0 0 26 26"><polygon points="1.5,4.5 4.5,1.5 20.5,1.5 23.5,4.5 23.5,22.5 20.5,24 1.5,24" fill="#fff" stroke="#333" stroke-width="1.4" stroke-linejoin="round"/><polyline points="1.5,4.5 20.5,4.5 23.5,1.5" fill="none" stroke="#333" stroke-width="1"/><line x1="20.5" y1="4.5" x2="20.5" y2="24" stroke="#333" stroke-width="1"/><polygon points="8,12 10.5,9.5 22.5,9.5 22.5,23 8,23" fill="#8e8e8e" stroke="#333" stroke-width="1.1"/><polyline points="8,12 20.5,12 22.5,9.5 M20.5,12 V23" fill="none" stroke="#555" stroke-width="0.9"/></svg><div class="t" style="left:69px;top:532px;font-size:19.8px;color:#2e2e2e">Rivet Holes</div><svg class="a" style="left:38px;top:568px" width="26" height="26" viewBox="0 0 26 26"><path d="M1,3 a1.5,1.5 0 0 1 1.5,-1.5 h7 l3,3 h11 a1.5,1.5 0 0 1 1.5,1.5 v13 a1.5,1.5 0 0 1 -1.5,1.5 h-21 a1.5,1.5 0 0 1 -1.5,-1.5z" fill="none" stroke="#555" stroke-width="1.5"/><path d="M1,6.5 H12" stroke="#555" stroke-width="1"/></svg><div class="t" style="left:69px;top:571px;font-size:19.8px;color:#2e2e2e">Cross Tube Gusset (2)</div><svg class="a" style="left:7px;top:574px" width="18" height="12" viewBox="0 0 18 12"><polyline points="1.5,2 9,10 16.5,2" fill="none" stroke="#555" stroke-width="2.4"/></svg><svg class="a" style="left:38px;top:607px" width="26" height="26" viewBox="0 0 26 26"><path d="M4,18 L17,3 Q19,1 21,3 Q23,5 21,7 L8,22 L3,23z" fill="none" stroke="#a8a8a8" stroke-width="1.3"/><path d="M4,18 L8,22" stroke="#a8a8a8" stroke-width="1.1"/><rect x="0" y="22.5" width="23" height="1.1" fill="#7a8cc8"/></svg><div class="t" style="left:69px;top:610px;font-size:19.8px;color:#9b9b9b">Cross Tube Gusset</div><svg class="a" style="left:38px;top:646px" width="26" height="26" viewBox="0 0 26 26"><polygon points="1.5,4.5 4.5,1.5 20.5,1.5 23.5,4.5 23.5,22.5 20.5,24 1.5,24" fill="#fff" stroke="#333" stroke-width="1.4" stroke-linejoin="round"/><polyline points="1.5,4.5 20.5,4.5 23.5,1.5" fill="none" stroke="#333" stroke-width="1"/><line x1="20.5" y1="4.5" x2="20.5" y2="24" stroke="#333" stroke-width="1"/><polygon points="8,12 10.5,9.5 22.5,9.5 22.5,23 8,23" fill="#8e8e8e" stroke="#333" stroke-width="1.1"/><polyline points="8,12 20.5,12 22.5,9.5 M20.5,12 V23" fill="none" stroke="#555" stroke-width="0.9"/></svg><div class="t" style="left:69px;top:649px;font-size:19.8px;color:#2e2e2e">Cross Tube Gusset</div><div class="a" style="left:15px;top:-2px;width:1px;height:93px;background:#c8c8c8"></div><div class="a" style="left:8px;top:91px;width:14px;height:1px;background:#c8c8c8"></div><div class="a" style="left:15px;top:212px;width:1px;height:114px;background:#c8c8c8"></div><div class="a" style="left:8px;top:326px;width:14px;height:1px;background:#c8c8c8"></div><div class="a" style="left:15px;top:368px;width:1px;height:191px;background:#c8c8c8"></div><div class="a" style="left:8px;top:559px;width:14px;height:1px;background:#c8c8c8"></div><div class="a" style="left:15px;top:602px;width:1px;height:74px;background:#c8c8c8"></div><div class="a" style="left:8px;top:676px;width:14px;height:1px;background:#c8c8c8"></div></div><div class="a" style="left:68px;top:907px;width:285px;height:11px;background:#b3b3b3"></div><div class="a" style="left:59px;top:932px;width:300px;height:1.2px;background:#e0e0e0"></div><svg class="a" style="left:66px;top:948px" width="18" height="12" viewBox="0 0 18 12"><polyline points="1.5,2 9,10 16.5,2" fill="none" stroke="#555" stroke-width="2.4"/></svg><div class="t" style="left:95px;top:945px;font-size:19.8px;color:#2e2e2e;font-weight:normal;font-style:normal;">Parts (8)</div><svg class="a" style="left:96px;top:981px" width="24" height="25" viewBox="0 0 24 25"><path d="M1.5,15 L6,11 H11 V4 L15,1.5 L21,4 V19 L16,23 H1.5z" fill="#fff" stroke="#aaa" stroke-width="1.4" stroke-linejoin="round"/><polyline points="1.5,15 16,15 21,11 M16,15 V23 M11,11 H16 V4 L21,4 M11,4 L16,4" fill="none" stroke="#aaa" stroke-width="1"/></svg><div class="t" style="left:128px;top:984px;font-size:19.8px;color:#9b9b9b;font-weight:normal;font-style:normal;">Origin Cube</div><svg class="a" style="left:96px;top:1020px" width="24" height="25" viewBox="0 0 24 25"><path d="M1.5,15 L6,11 H11 V4 L15,1.5 L21,4 V19 L16,23 H1.5z" fill="#fff" stroke="#555" stroke-width="1.4" stroke-linejoin="round"/><polyline points="1.5,15 16,15 21,11 M16,15 V23 M11,11 H16 V4 L21,4 M11,4 L16,4" fill="none" stroke="#555" stroke-width="1"/></svg><div class="t" style="left:128px;top:1023px;font-size:19.8px;color:#2e2e2e;font-weight:normal;font-style:normal;">Tube 2"x1"x17.5"</div><svg class="a" style="left:96px;top:1059px" width="24" height="25" viewBox="0 0 24 25"><path d="M1.5,15 L6,11 H11 V4 L15,1.5 L21,4 V19 L16,23 H1.5z" fill="#fff" stroke="#555" stroke-width="1.4" stroke-linejoin="round"/><polyline points="1.5,15 16,15 21,11 M16,15 V23 M11,11 H16 V4 L21,4 M11,4 L16,4" fill="none" stroke="#555" stroke-width="1"/></svg><div class="t" style="left:128px;top:1062px;font-size:19.8px;color:#2e2e2e;font-weight:normal;font-style:normal;">Tube 2"x1"x17.5"</div><svg class="a" style="left:96px;top:1098px" width="24" height="25" viewBox="0 0 24 25"><path d="M1.5,15 L6,11 H11 V4 L15,1.5 L21,4 V19 L16,23 H1.5z" fill="#fff" stroke="#555" stroke-width="1.4" stroke-linejoin="round"/><polyline points="1.5,15 16,15 21,11 M16,15 V23 M11,11 H16 V4 L21,4 M11,4 L16,4" fill="none" stroke="#555" stroke-width="1"/></svg><div class="t" style="left:128px;top:1101px;font-size:19.8px;color:#2e2e2e;font-weight:normal;font-style:normal;">Tube 2"x2"x24"</div><svg class="a" style="left:96px;top:1137px" width="24" height="25" viewBox="0 0 24 25"><path d="M1.5,15 L6,11 H11 V4 L15,1.5 L21,4 V19 L16,23 H1.5z" fill="#fff" stroke="#555" stroke-width="1.4" stroke-linejoin="round"/><polyline points="1.5,15 16,15 21,11 M16,15 V23 M11,11 H16 V4 L21,4 M11,4 L16,4" fill="none" stroke="#555" stroke-width="1"/></svg><div class="t" style="left:128px;top:1140px;font-size:19.8px;color:#2e2e2e;font-weight:normal;font-style:normal;">Tube 2"x1"x17.5"</div><svg class="a" style="left:96px;top:1176px" width="24" height="25" viewBox="0 0 24 25"><path d="M1.5,15 L6,11 H11 V4 L15,1.5 L21,4 V19 L16,23 H1.5z" fill="#fff" stroke="#555" stroke-width="1.4" stroke-linejoin="round"/><polyline points="1.5,15 16,15 21,11 M16,15 V23 M11,11 H16 V4 L21,4 M11,4 L16,4" fill="none" stroke="#555" stroke-width="1"/></svg><div class="t" style="left:128px;top:1179px;font-size:19.8px;color:#2e2e2e;font-weight:normal;font-style:normal;">Tube 2"x1"x17.5"</div><svg class="a" style="left:96px;top:1215px" width="24" height="25" viewBox="0 0 24 25"><path d="M1.5,15 L6,11 H11 V4 L15,1.5 L21,4 V19 L16,23 H1.5z" fill="#fff" stroke="#555" stroke-width="1.4" stroke-linejoin="round"/><polyline points="1.5,15 16,15 21,11 M16,15 V23 M11,11 H16 V4 L21,4 M11,4 L16,4" fill="none" stroke="#555" stroke-width="1"/></svg><div class="t" style="left:128px;top:1218px;font-size:19.8px;color:#2e2e2e;font-weight:normal;font-style:normal;">Bellypan</div><svg class="a" style="left:96px;top:1254px" width="24" height="25" viewBox="0 0 24 25"><path d="M1.5,15 L6,11 H11 V4 L15,1.5 L21,4 V19 L16,23 H1.5z" fill="#fff" stroke="#555" stroke-width="1.4" stroke-linejoin="round"/><polyline points="1.5,15 16,15 21,11 M16,15 V23 M11,11 H16 V4 L21,4 M11,4 L16,4" fill="none" stroke="#555" stroke-width="1"/></svg><div class="t" style="left:128px;top:1257px;font-size:19.8px;color:#2e2e2e;font-weight:normal;font-style:normal;">Crosstube Gusset</div><div class="a" style="left:59px;top:1394px;width:2499px;height:44px;background:#d7d7d7"></div><div class="a" style="left:0px;top:1394px;width:59px;height:44px;background:#f7f7f7;border-right:1px solid #dcdcdc"></div><svg class="a" style="left:16px;top:1408px" width="29" height="24" viewBox="0 0 29 24"><path d="M0,1 H27 V9 Q22,4 16,6 Q10,8 9,15 H0z" fill="#333"/><circle cx="16" cy="14" r="6.3" fill="none" stroke="#333" stroke-width="2.6"/><path d="M20.5,18.5 L27,23.5" stroke="#333" stroke-width="3"/></svg><div class="a" style="left:59px;top:1394px;width:52px;height:44px;background:#d1d1d1"></div><svg class="a" style="left:74px;top:1405px" width="23" height="23" viewBox="0 0 23 23"><path d="M11.5,0 V23 M0,11.5 H23" stroke="#666" stroke-width="3.6"/></svg><svg class="a" style="left:110px;top:1394px" width="70" height="44" viewBox="0 0 70 44"><polygon points="0,0 56,0 68,22 56,44 0,44" fill="#ebebeb"/></svg><svg class="a" style="left:124px;top:1399px" width="28" height="28" viewBox="0 0 28 28"><polygon points="14,1 27,14 27,27 17,27 17,18 11,18 11,27 1,27 1,14" fill="#666"/><rect x="21" y="2" width="4" height="8" fill="#666"/></svg><svg class="a" style="left:164px;top:1394px" width="184" height="44" viewBox="0 0 184 44"><polygon points="0,0 168,0 182,22 168,44 0,44 12,22" fill="#fff"/></svg><svg class="a" style="left:189px;top:1402px" width="28" height="22" viewBox="0 0 28 22"><path d="M1,3 Q1,1 3,1 H10 L13,4 H25 Q27,4 27,6 V19 Q27,21 25,21 H3 Q1,21 1,19z" fill="none" stroke="#333" stroke-width="1.6"/><path d="M1,6.5 H13" stroke="#333" stroke-width="1"/></svg><div class="t" style="left:226px;top:1405px;font-size:20.6px;color:#555;font-weight:normal;font-style:normal;">Drivetrain</div><div class="a" style="left:349px;top:1395px;width:299px;height:43px;background:#fff;border-radius:5px 5px 0 0"></div><div class="a" style="left:349px;top:1434px;width:299px;height:4px;background:#1f4fa6"></div><svg class="a" style="left:366px;top:1400px" width="27" height="29" viewBox="0 0 27 29"><polygon points="1,11 4,8 10,8 10,28 1,28" fill="#fff" stroke="#333" stroke-width="1.5"/><polygon points="12,4 15,1 24,1 26,4 26,28 12,28" fill="#fff" stroke="#333" stroke-width="1.5"/><path d="M4,8 V28 M15,1 V28 M15,4 H26" stroke="#333" stroke-width="1"/></svg><div class="t" style="left:399px;top:1406px;font-size:20.6px;color:#2e2e2e;font-weight:normal;font-style:normal;">Drivetrain</div><div class="a" style="left:652px;top:1395px;width:299px;height:41px;background:#e7e7e7;border-radius:5px 5px 0 0"></div><svg class="a" style="left:668px;top:1400px" width="28" height="28" viewBox="0 0 28 28"><polygon points="1,4 5,1 26,1 26,22 22,27 1,27" fill="#fff" stroke="#333" stroke-width="1.5"/><polygon points="2,5 5,2 21,2 21,19 2,19" fill="#9a9a9a"/><path d="M21,2 L26,1 M21,19 L26,22" stroke="#333" stroke-width="1"/></svg><div class="t" style="left:702px;top:1406px;font-size:21px;color:#555;font-weight:normal;font-style:normal;">Drivetrain Assembly</div><div class="a" style="left:368px;top:716px;width:48px;height:50px;background:#fff"></div><svg class="a" style="left:368px;top:716px" width="48" height="50" viewBox="368 716 48 50"><path d="M378.6,731.4 L383,735.6 L387.4,731.4" fill="none" stroke="#333" stroke-width="1.6"/><path d="M383,738.5 V757" stroke="#333" stroke-width="1.7"/><path d="M391,732.6 H405.5 M386,740.1 H405.5 M386,747.6 H405.5 M386,755.1 H405.5" stroke="#333" stroke-width="1.6"/></svg><div class="a" style="left:2511px;top:485px;width:47px;height:199px;background:#fff;border:1.2px solid #c9c9c9;border-right:none"></div><div class="a" style="left:2511px;top:534.6px;width:47px;height:1.2px;background:#d0d0d0"></div><div class="a" style="left:2511px;top:584.2px;width:47px;height:1.2px;background:#d0d0d0"></div><div class="a" style="left:2511px;top:633.8px;width:47px;height:1.2px;background:#d0d0d0"></div><div class="a" style="left:2511px;top:700px;width:47px;height:297px;background:#fff;border:1.2px solid #c9c9c9;border-right:none"></div><div class="a" style="left:2511px;top:749.5px;width:47px;height:1.2px;background:#d0d0d0"></div><div class="a" style="left:2511px;top:799.0px;width:47px;height:1.2px;background:#d0d0d0"></div><div class="a" style="left:2511px;top:848.5px;width:47px;height:1.2px;background:#d0d0d0"></div><div class="a" style="left:2511px;top:898.0px;width:47px;height:1.2px;background:#d0d0d0"></div><div class="a" style="left:2511px;top:947.5px;width:47px;height:1.2px;background:#d0d0d0"></div><svg class="a" style="left:2521.5px;top:496.0px" width="30" height="30" viewBox="0 0 30 30"><polygon points="4,22 14,4 21,7 13,22" fill="#777" stroke="#333" stroke-width="1"/><polygon points="10,22 20,8 27,13 20,22" fill="#999" stroke="#333" stroke-width="1"/><rect x="2" y="20" width="26" height="8" rx="1" fill="#fff" stroke="#333" stroke-width="1.3"/><rect x="18" y="21" width="9" height="6" fill="#ccc"/><circle cx="6" cy="24" r="1.3" fill="#333"/></svg><svg class="a" style="left:2521.5px;top:546.0px" width="30" height="30" viewBox="0 0 30 30"><rect x="2" y="2" width="12" height="10" fill="#1f5bbf"/><path d="M2,5.5 H14 M2,8.5 H14 M6,2 V12 M10,2 V12" stroke="#fff" stroke-width="0.8"/><polygon points="18,9 28,14 28,25 18,29 8,25 8,14" fill="#fff" stroke="#333" stroke-width="1.5"/><polyline points="8,14 18,19 28,14 M18,19 V29" fill="none" stroke="#333" stroke-width="1.2"/></svg><svg class="a" style="left:2521.5px;top:595.0px" width="30" height="30" viewBox="0 0 30 30"><rect x="2" y="1" width="12" height="10" fill="#555"/><path d="M2,4.5 H14 M2,7.5 H14 M6,1 V11 M10,1 V11" stroke="#fff" stroke-width="0.8"/><polygon points="16,10 24,14 24,23 16,27 8,23 8,14" fill="#fff" stroke="#333" stroke-width="1.4"/><polyline points="8,14 16,18 24,14 M16,18 V27" fill="none" stroke="#333" stroke-width="1.1"/><path d="M5,13 Q3,13 3,16 V20 Q3,22 1,22 Q3,22 3,24 V27 Q3,29 5,29 M26,13 Q28,13 28,16 V20 Q28,22 30,22 Q28,22 28,24 V27 Q28,29 26,29" fill="none" stroke="#333" stroke-width="1.3"/></svg><svg class="a" style="left:2520.5px;top:645.0px" width="32" height="30" viewBox="0 0 32 30"><rect x="3" y="1" width="12" height="10" fill="#555"/><path d="M3,4.5 H15 M3,7.5 H15 M7,1 V11 M11,1 V11" stroke="#fff" stroke-width="0.8"/><path d="M5,8 Q1,15 5,28" fill="none" stroke="#333" stroke-width="2.4"/><path d="M27,12 Q31,20 27,28" fill="none" stroke="#333" stroke-width="2.4"/><text x="16" y="26" font-size="20" font-style="italic" font-weight="bold" font-family="Liberation Serif" text-anchor="middle" fill="#333">x</text></svg><svg class="a" style="left:2519.5px;top:708.0px" width="34" height="34" viewBox="0 0 34 34"><rect x="0" y="0" width="34" height="34" rx="4" fill="#d9d9d9"/><rect x="3" y="3" width="28" height="28" fill="#1e5bd8" stroke="#222" stroke-width="1.2"/><text x="17" y="25" font-size="17" font-weight="bold" font-family="Liberation Serif" text-anchor="middle" fill="#fff">MK</text></svg><svg class="a" style="left:2519.5px;top:757.0px" width="34" height="34" viewBox="0 0 34 34"><rect x="0" y="0" width="34" height="34" rx="4" fill="#d9d9d9"/><circle cx="17" cy="5" r="2" fill="#222"/><rect x="16.3" y="6" width="1.4" height="5" fill="#222"/><path d="M10,7 Q8,4 10,2 M24,7 Q26,4 24,2" fill="none" stroke="#4a7be0" stroke-width="1"/><polygon points="5,12 29,10 30,28 6,30" fill="#222"/><rect x="2" y="16" width="3" height="7" fill="#222"/><rect x="29" y="14" width="3" height="7" fill="#222"/><circle cx="12" cy="19" r="3.8" fill="#fff"/><circle cx="22" cy="18" r="3.8" fill="#fff"/><circle cx="12.5" cy="19.5" r="1.8" fill="#2f6fe0"/><circle cx="21.5" cy="18.5" r="1.8" fill="#2f6fe0"/><path d="M13,25 Q18,28 22,23" fill="none" stroke="#fff" stroke-width="1.6"/></svg><svg class="a" style="left:2519.5px;top:807.0px" width="34" height="34" viewBox="0 0 34 34"><rect x="0" y="0" width="34" height="34" rx="4" fill="#e0e0e0"/><rect x="3" y="3" width="28" height="28" fill="#fff"/><path d="M9,11 L5,17 L9,23 M5,17 H12" fill="none" stroke="#222" stroke-width="1.5"/><path d="M15,8 Q12,8 12,11 V15 Q12,17 10.5,17 Q12,17 12,19 V23 Q12,26 15,26" fill="none" stroke="#222" stroke-width="1.5"/><polygon points="22,11 28,14 28,21 22,24 16,21 16,14" fill="#fff" stroke="#222" stroke-width="1.3"/><polyline points="16,14 22,17 28,14 M22,17 V24" fill="none" stroke="#222" stroke-width="1"/></svg><svg class="a" style="left:2519.5px;top:857.0px" width="34" height="34" viewBox="0 0 34 34"><rect x="0" y="0" width="34" height="34" rx="4" fill="#d9d9d9"/><polygon points="17,4 30,30 22,30 17,20 12,30 4,30" fill="#29a8e0"/><path d="M8,24 Q17,18 26,26" fill="none" stroke="#d9d9d9" stroke-width="3"/></svg><svg class="a" style="left:2519.5px;top:906.0px" width="34" height="34" viewBox="0 0 34 34"><rect x="0" y="0" width="34" height="34" rx="4" fill="#d9d9d9"/><rect x="3" y="3" width="28" height="28" fill="#4caf50"/><path d="M6,9 Q11,7 16,9 V26 Q11,24 6,26z M18,9 Q23,7 28,9 V26 Q23,24 18,26z" fill="#fff"/></svg><svg class="a" style="left:2519.5px;top:955.0px" width="34" height="34" viewBox="0 0 34 34"><rect x="0" y="0" width="34" height="34" rx="4" fill="#d9d9d9"/><rect x="3" y="3" width="28" height="28" fill="#1e5bd8" stroke="#222" stroke-width="1.4"/><path d="M6,9 Q11,7 16,9 V26 Q11,24 6,26z M18,9 Q23,7 28,9 V26 Q23,24 18,26z" fill="#fff"/></svg><svg class="a" style="left:2411px;top:1364px" width="26" height="20" viewBox="0 0 26 20"><ellipse cx="15.5" cy="7" rx="8" ry="6" fill="#fff" stroke="#333" stroke-width="1.8"/><ellipse cx="15.5" cy="6" rx="3.5" ry="1.8" fill="none" stroke="#333" stroke-width="1.5"/><path d="M1,10 H9 M1,10 V18.5 H17 Q23,18 23.5,12 V7" fill="none" stroke="#333" stroke-width="1.8"/><path d="M4,18 V15 M7,18 V16 M10,18 V15 M13,18 V16 M16,18 V15 M19,17 V15" stroke="#333" stroke-width="0.8"/></svg><svg class="a" style="left:2461px;top:1364px" width="32" height="21" viewBox="0 0 32 21"><path d="M1.5,19.5 V16 Q1.5,1.5 16,1.5 Q30.5,1.5 30.5,16 V19.5z" fill="none" stroke="#333" stroke-width="2"/><path d="M6,15.5 Q6,6 16,6 Q26,6 26,15.5 H19 Q19,12 16,12 Q13,12 13,15.5z" fill="none" stroke="#333" stroke-width="1.6"/></svg><svg class="a" style="left:2517px;top:1363px" width="24" height="22" viewBox="0 0 24 22"><path d="M4,2 H20 M12,2 V19 M1,19.5 H23" stroke="#333" stroke-width="2"/><path d="M4,2 L1,13 H7z M20,2 L17,13 H23z" fill="none" stroke="#333" stroke-width="1.3"/><rect x="0.5" y="11.5" width="7" height="2.5" fill="#333"/><rect x="16.5" y="11.5" width="7" height="2.5" fill="#333"/><rect x="0.5" y="18" width="23" height="3" fill="#333"/></svg><svg class="a" style="left:2300px;top:130px" width="250" height="240" viewBox="2300 130 250 240">
<polygon points="2424,138 2437,150 2411,150" fill="#e3e6e9"/>
<polygon points="2424,359 2437,347 2411,347" fill="#e3e6e9"/>
<polygon points="2313,248 2327,235 2327,261" fill="#e3e6e9"/>
<polygon points="2535,248 2521,235 2521,261" fill="#e3e6e9"/>
<path d="M2392,152 Q2365,160 2349,178" fill="none" stroke="#e3e6e9" stroke-width="7"/>
<polygon points="2342,170 2345,188 2360,184" fill="#e3e6e9"/>
<path d="M2456,152 Q2483,160 2499,178" fill="none" stroke="#e3e6e9" stroke-width="7"/>
<polygon points="2506,170 2503,188 2488,184" fill="#e3e6e9"/>
<polygon points="2368,214 2404.7,188 2478.7,210 2478.7,274 2437,306 2369,284" fill="#e4e7ea" stroke="#e4e7ea" stroke-width="10" stroke-linejoin="round"/>
<polygon points="2383.1,213.1 2409.6,194.4 2462.9,210.2 2432.8,225.3" fill="#fcfcfc" stroke="#fcfcfc" stroke-width="8" stroke-linejoin="round"/>
<polygon points="2377.0,225.6 2428.1,238.2 2428.1,293.7 2377.8,277.4" fill="#fcfcfc" stroke="#fcfcfc" stroke-width="8" stroke-linejoin="round"/>
<polygon points="2443.3,238.3 2472.4,223.6 2472.4,268.4 2443.3,290.8" fill="#fcfcfc" stroke="#fcfcfc" stroke-width="7" stroke-linejoin="round"/>
<circle cx="2437" cy="241" r="8.5" fill="#fcfcfc"/>
<ellipse cx="2375" cy="228" rx="5" ry="8" fill="#fcfcfc"/>
<ellipse cx="2437" cy="302" rx="9" ry="4" fill="#fcfcfc"/>
<line x1="2361.4" y1="296" x2="2395" y2="267" stroke="#30b030" stroke-width="1.5"/>
<line x1="2395" y1="267" x2="2410" y2="254" stroke="#9ad09a" stroke-width="1"/>
<line x1="2361.4" y1="221" x2="2361.4" y2="296" stroke="#3030d0" stroke-width="1.8"/>
<line x1="2361.4" y1="296" x2="2437.7" y2="318.6" stroke="#e03030" stroke-width="1.8"/>
<text x="2354" y="214" font-family="Liberation Sans" font-size="17" font-weight="bold" fill="#3333cc">Z</text>
<text x="2445" y="329" font-family="Liberation Sans" font-size="17" font-weight="bold" fill="#dd3333">X</text>
<text x="2407" y="256" font-family="Liberation Sans" font-size="10" fill="#9ad09a">Y</text>
<text x="2383" y="273" font-family="Liberation Sans" font-size="15" fill="#3f3f3f" transform="rotate(11 2403 266)">Front</text>
<text x="2410" y="214" font-family="Liberation Sans" font-size="12" font-style="italic" fill="#444" transform="rotate(20 2424 210)">Top</text>
<text x="2445" y="262" font-family="Liberation Sans" font-size="12" font-style="italic" fill="#555" transform="rotate(-66 2460 255)">Right</text>
<polygon points="2491,334 2504,340 2504,355 2491,361 2478,355 2478,340" fill="#d0d0d0" stroke="#333" stroke-width="1.3"/>
<polygon points="2491,346 2504,340 2504,355 2491,361" fill="#eeeeee" stroke="#333" stroke-width="1"/>
<polygon points="2478,340 2491,346 2491,361 2478,355" fill="#a8a8a8" stroke="#333" stroke-width="1"/>
<polygon points="2517,343 2528,343 2522.5,349" fill="#333"/>
</svg>
</body></html>
